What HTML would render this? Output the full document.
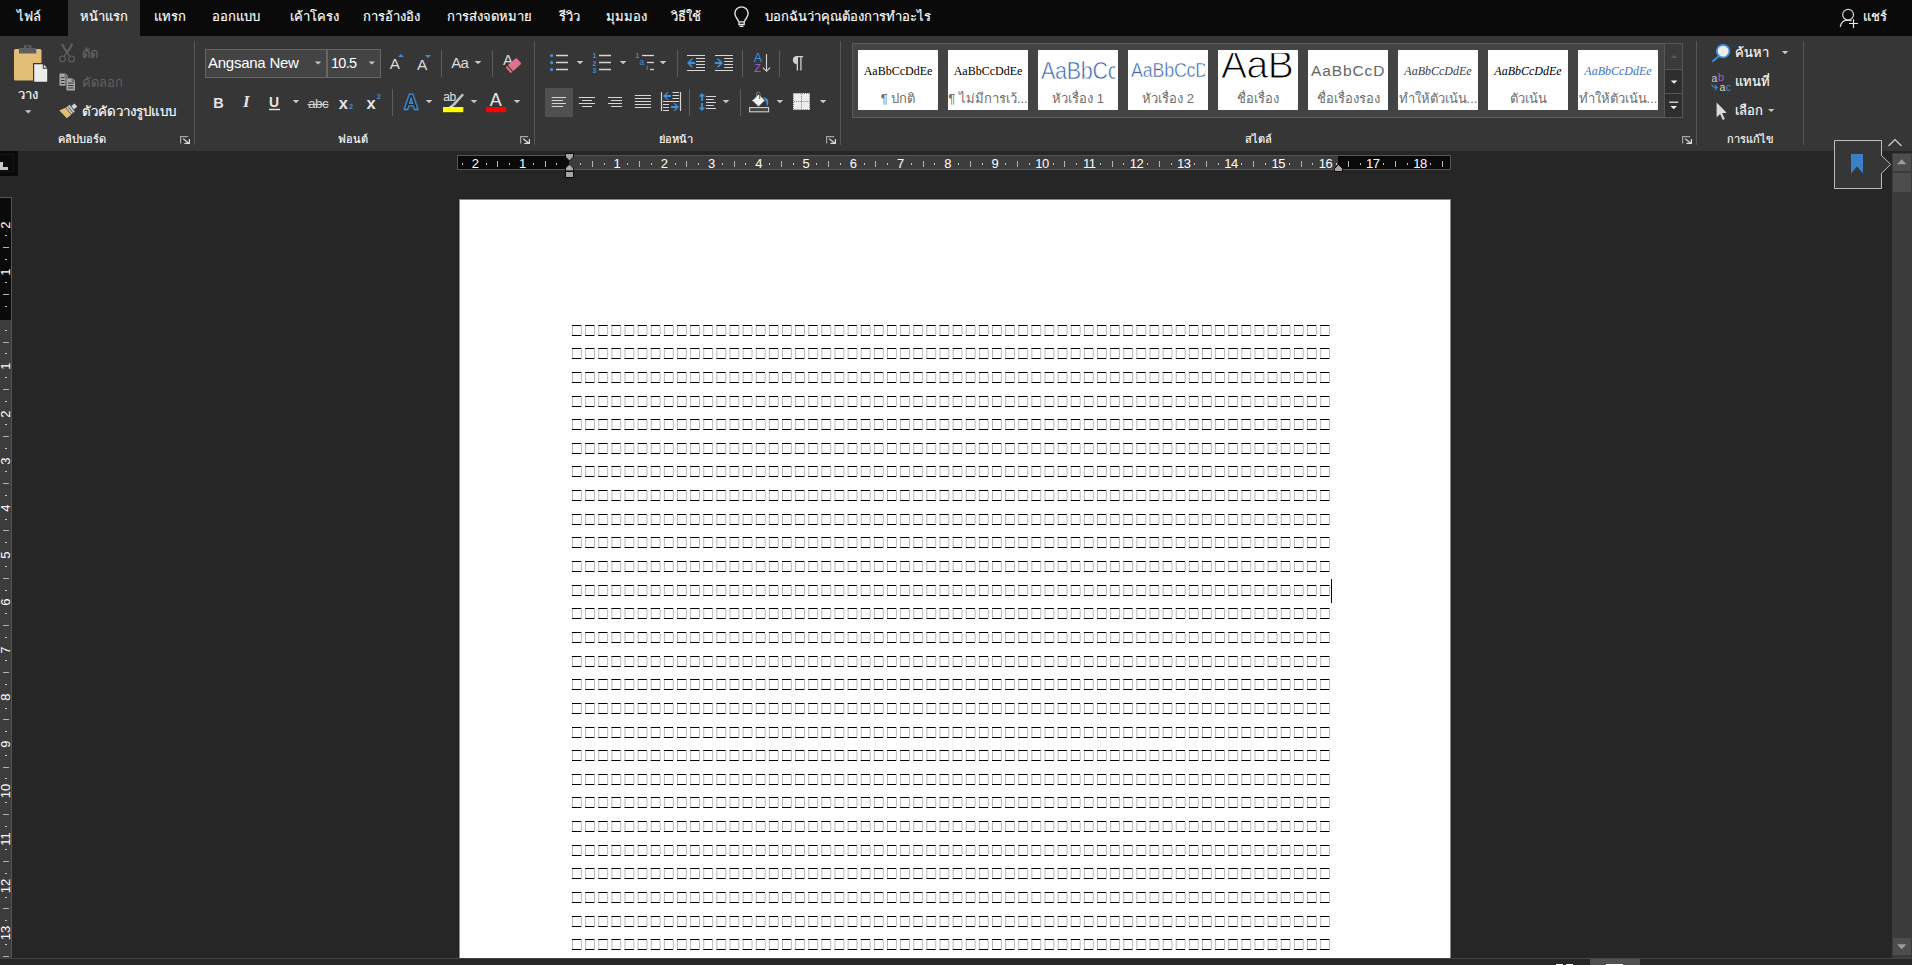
<!DOCTYPE html>
<html lang="th"><head><meta charset="utf-8"><title>Word</title>
<style>
*{box-sizing:border-box}
html,body{margin:0;padding:0}
html{overflow:hidden;background:#262626}
body{width:1912px;height:965px;overflow:hidden;background:#262626;position:relative;font-family:"Liberation Sans",sans-serif;font-size:15px;color:#fff}
.a{position:absolute}
#tabbar{position:absolute;left:0;top:0;width:1912px;height:36px;background:#0a0a0a}
#seltab{position:absolute;left:68px;top:0;width:72px;height:36px;background:#363636}
#ribbon{position:absolute;left:0;top:36px;width:1912px;height:115px;background:#363636}
.t{position:absolute;height:20px;line-height:20px;color:#fff;white-space:nowrap}
.th{-webkit-text-stroke:.15px}
.cb{background:#444;border:1px solid #666}
.tile{width:80px;height:60px;background:#fff;overflow:hidden}
.ts{position:absolute;left:3px;width:74px;clip-path:inset(-60px 0 -60px 0);height:20px;line-height:20px;text-align:center;white-space:nowrap}
.tl{position:absolute;left:-10px;width:100px;height:20px;line-height:20px;text-align:center;white-space:nowrap;font-size:13px;color:#6e6e6e}
#tabsel{position:absolute;left:0;top:151px;width:18px;height:25px;background:#0a0a0a}
#hr{position:absolute;left:457px;top:155px;width:994px;height:15px;background:#3c3c3c;border:1px solid #555}
#hrl{position:absolute;left:458px;top:156px;width:111px;height:13px;background:#0a0a0a}
#hrr{position:absolute;left:1338px;top:156px;width:112px;height:13px;background:#0a0a0a}
.rn{position:absolute;top:156px;width:40px;height:15px;line-height:15px;text-align:center;font-size:13px;color:#fff;letter-spacing:-.6px;text-indent:.6px}
#vr{position:absolute;left:0;top:197px;width:12px;height:761px;background:#3c3c3c;border-right:1px solid #555;border-top:1px solid #555}
#vrt{position:absolute;left:0;top:198px;width:11px;height:122px;background:#0a0a0a}
.vn{position:absolute;left:-14px;width:40px;height:40px;line-height:40px;text-align:center;font-size:13px;color:#fff;transform:rotate(-90deg)}
#page{position:absolute;left:460px;top:200px;width:990px;height:758px;background:#fff;box-shadow:0 0 0 1px #8c8c8c,0 0 0 2px #212121}
#caret{position:absolute;left:1331px;top:579px;width:1px;height:24px;background:#000}
#sb{position:absolute;left:1892px;top:153px;width:20px;height:805px;background:#3b3b3b}
#status{position:absolute;left:0;top:958px;width:1912px;height:7px;background:#262626;border-top:1px solid #444}
</style></head><body>
<div id="tabbar"><div id="seltab"></div><span class="t th" style="left:17px;top:6.5px;font-size:13px">ไฟล์</span><span class="t th" style="left:80px;top:6.5px;font-size:13px">หน้าแรก</span><span class="t th" style="left:154px;top:6.5px;font-size:13px">แทรก</span><span class="t th" style="left:212px;top:6.5px;font-size:13px">ออกแบบ</span><span class="t th" style="left:289.5px;top:6.5px;font-size:13px">เค้าโครง</span><span class="t th" style="left:363px;top:6.5px;font-size:13px">การอ้างอิง</span><span class="t th" style="left:447px;top:6.5px;font-size:13px">การส่งจดหมาย</span><span class="t th" style="left:559px;top:6.5px;font-size:13px">รีวิว</span><span class="t th" style="left:606px;top:6.5px;font-size:13px">มุมมอง</span><span class="t th" style="left:670.5px;top:6.5px;font-size:13px">วิธีใช้</span><span class="t th" style="left:765px;top:6.5px;font-size:13px">บอกฉันว่าคุณต้องการทำอะไร</span><span class="t th" style="left:1862.5px;top:6.5px;font-size:13px">แชร์</span><svg class="a" width="1912" height="36" viewBox="0 0 1912 36" style="left:0;top:0" fill="none" stroke="#e6e6e6" stroke-width="1.4"><path d="M738.8 21.6l-2.6-4.2a6.6 6.6 0 1 1 10.600 0l-2.6 4.200"/><path d="M738.900 21.800h5.300v2.700h-5.300zM739.600 26.400h3.900" stroke-width="1.300"/><g stroke="#d4d4d4" stroke-width="1.200"><circle cx="1848.100" cy="14.700" r="5.400"/><path d="M1840.300 27c.5-4.200 3.500-6.800 7.200-6.900 1.500 0 2.900.300 4.100.900"/><path d="M1853.500 19.200v8.800M1849 23.500h9" stroke="#e8e8e8"/></g></svg></div>
<div id="ribbon"><div class="a" style="left:0;top:-36px;width:0;height:0"><span class="t th" style="left:58px;top:129.2px;font-size:11px">คลิปบอร์ด</span><span class="t th" style="left:338px;top:129.2px;font-size:11px">ฟอนต์</span><span class="t th" style="left:659px;top:129.2px;font-size:11px">ย่อหน้า</span><span class="t th" style="left:1245px;top:129.2px;font-size:11px">สไตล์</span><span class="t th" style="left:1727px;top:129.2px;font-size:11px">การแก้ไข</span><span class="t th" style="left:17.5px;top:84.5px;font-size:13px">วาง</span><span class="t" style="left:82px;top:44.0px;font-size:13px;color:#6a6a6a">ตัด</span><span class="t" style="left:82px;top:72.5px;font-size:13px;color:#626262">คัดลอก</span><span class="t th" style="left:82px;top:101.9px;font-size:13.3px">ตัวคัดวางรูปแบบ</span><div class="a cb" style="left:205px;top:49px;width:122px;height:29px"></div><div class="a cb" style="left:327px;top:49px;width:54px;height:29px"></div><span class="t" style="left:208px;top:52.5px;font-size:15px;letter-spacing:-.25px">Angsana New</span><span class="t" style="left:331px;top:52.7px;font-size:14.5px;letter-spacing:-.7px">10.5</span><span class="t" style="left:389.8px;top:53.8px;font-size:15.3px;color:#dcdcdc">A</span><span class="t" style="left:417px;top:54.6px;font-size:15.5px;color:#dcdcdc">A</span><span class="t" style="left:451.3px;top:53.0px;font-size:15px;color:#dcdcdc;letter-spacing:-.7px">Aa</span><span class="t" style="left:503px;top:49.8px;font-size:15px;color:#dcdcdc">A</span><span class="t" style="left:213.3px;top:93.2px;font-size:14.5px;color:#e4e4e4;font-weight:bold">B</span><span class="t" style="left:243px;top:92.3px;font-size:17px;color:#e4e4e4;font-family:'Liberation Serif',serif;font-style:italic;font-weight:bold">I</span><span class="t" style="left:269px;top:91.9px;font-size:15.5px;color:#e4e4e4;font-weight:bold;transform:scaleX(.9);transform-origin:0 0">U</span><span class="t" style="left:308px;top:93.8px;font-size:13.5px;color:#d4d4d4;letter-spacing:-.5px">abc</span><span class="t" style="left:338.8px;top:92.8px;font-size:16.5px;color:#e4e4e4;font-weight:bold">x</span><span class="t" style="left:349px;top:97.2px;font-size:7.5px;color:#3f8fdc;font-weight:bold">2</span><span class="t" style="left:366.6px;top:92.8px;font-size:16.5px;color:#e4e4e4;font-weight:bold">x</span><span class="t" style="left:376.8px;top:87.2px;font-size:7.5px;color:#3f8fdc;font-weight:bold">2</span><span class="t" style="left:443.3px;top:86.6px;font-size:12px;color:#e0e0e0;letter-spacing:-.5px">ab</span><span class="t" style="left:489.7px;top:89.6px;font-size:18px;color:#e8e8e8">A</span><span class="t" style="left:592.6px;top:46.3px;font-size:6.8px;color:#3f8fdc;font-weight:bold">1</span><span class="t" style="left:592.6px;top:53.5px;font-size:6.8px;color:#3f8fdc;font-weight:bold">2</span><span class="t" style="left:592.6px;top:60.6px;font-size:6.8px;color:#3f8fdc;font-weight:bold">3</span><span class="t" style="left:635.4px;top:46.3px;font-size:6.8px;color:#3f8fdc;font-weight:bold">1</span><span class="t" style="left:639.6px;top:52.3px;font-size:8.5px;color:#3f8fdc">a</span><span class="t" style="left:646.4px;top:58.0px;font-size:8px;color:#3f8fdc">i</span><span class="t" style="left:753.8px;top:48.4px;font-size:12.3px;color:#3f8fdc">A</span><span class="t" style="left:754.2px;top:58.2px;font-size:10.8px;color:#a45fc0">Z</span><div class="a" style="left:852px;top:43px;width:813px;height:75px;background:#444;border:1px solid #5c5c5c"></div><div class="a tile" style="left:858px;top:50px"><span class="ts" style="top:11.0px;font-size:12px;color:#000;font-family:'Liberation Serif',serif">AaBbCcDdEe</span><span class="tl" style="top:39.2px">¶ ปกติ</span></div><div class="a tile" style="left:948px;top:50px"><span class="ts" style="top:11.0px;font-size:12px;color:#000;font-family:'Liberation Serif',serif">AaBbCcDdEe</span><span class="tl" style="top:39.2px">¶ ไม่มีการเว้...</span></div><div class="a tile" style="left:1038px;top:50px"><span class="ts" style="top:10.7px;font-size:23.5px;color:#3a66ae;text-align:left;letter-spacing:-.3px;-webkit-text-stroke:.55px #fff;width:81px;transform:scaleX(.915);transform-origin:0 0">AaBbCcDdEe</span><span class="tl" style="top:39.2px">หัวเรื่อง 1</span></div><div class="a tile" style="left:1128px;top:50px"><span class="ts" style="top:10.4px;font-size:19.5px;color:#3a66ae;text-align:left;letter-spacing:-.2px;-webkit-text-stroke:.45px #fff;width:81px;transform:scaleX(.915);transform-origin:0 0">AaBbCcDdEe</span><span class="tl" style="top:39.2px">หัวเรื่อง 2</span></div><div class="a tile" style="left:1218px;top:50px"><span class="ts" style="top:5.3px;font-size:39px;color:#000;text-align:left;-webkit-text-stroke:1px #fff;letter-spacing:-.5px;clip-path:inset(-2px 0 -60px 0)">AaB</span><span class="tl" style="top:39.2px">ชื่อเรื่อง</span></div><div class="a tile" style="left:1308px;top:50px"><span class="ts" style="top:11.0px;font-size:15.5px;color:#666;letter-spacing:.9px;text-align:left">AaBbCcD</span><span class="tl" style="top:39.2px">ชื่อเรื่องรอง</span></div><div class="a tile" style="left:1398px;top:50px"><span class="ts" style="top:10.8px;font-size:12px;color:#404040;font-family:'Liberation Serif',serif;font-style:italic">AaBbCcDdEe</span><span class="tl" style="top:39.2px">ทำให้ตัวเน้น...</span></div><div class="a tile" style="left:1488px;top:50px"><span class="ts" style="top:10.8px;font-size:12px;color:#000;font-family:'Liberation Serif',serif;font-style:italic">AaBbCcDdEe</span><span class="tl" style="top:39.2px">ตัวเน้น</span></div><div class="a tile" style="left:1578px;top:50px"><span class="ts" style="top:10.8px;font-size:12px;color:#4472c4;font-family:'Liberation Serif',serif;font-style:italic">AaBbCcDdEe</span><span class="tl" style="top:39.2px">ทำให้ตัวเน้น...</span></div><div class="a" style="left:1664px;top:43px;width:19px;height:27px;background:#3a3a3a;border:1px solid #565656"></div><div class="a" style="left:1664px;top:69px;width:19px;height:25px;background:#2e2e2e;border:1px solid #565656"></div><div class="a" style="left:1664px;top:93px;width:19px;height:25px;background:#2e2e2e;border:1px solid #565656"></div><span class="t th" style="left:1735px;top:43.1px;font-size:13px">ค้นหา</span><span class="t" style="left:1711.6px;top:67.8px;font-size:10.5px;color:#d0d0d0">a</span><span class="t" style="left:1717.8px;top:67.4px;font-size:11.5px;color:#a45fc0">b</span><span class="t" style="left:1719.6px;top:77.1px;font-size:10.5px;color:#d8d8d8">a</span><span class="t" style="left:1725.8px;top:77.1px;font-size:10.5px;color:#3f8fdc">c</span><span class="t th" style="left:1735px;top:72.2px;font-size:13px">แทนที่</span><span class="t th" style="left:1735px;top:101.1px;font-size:13px">เลือก</span><svg class="a" width="1912" height="115" viewBox="0 36 1912 115" style="left:0;top:36px"><path d="M194.5 41v104M534.5 41v104M840.5 41v104M1696.5 41v104M1803.5 41v104" stroke="#555" fill="none"/><path d="M441.5 50v27M492.5 50v27M677.5 50v27M742.5 50v27M779.5 50v27M392.5 89v27M689.5 89v27M740.5 89v27" stroke="#5c5c5c" fill="none"/><path d="M180.6 143.6v-7h7.6" stroke="#a4a4a4" stroke-width="1.2" fill="none"/><path d="M183.2 138.800l5.600 4.400M189.4 139v4.400h-5" stroke="#dadada" stroke-width="1.200" fill="none"/><path d="M520.6 143.6v-7h7.6" stroke="#a4a4a4" stroke-width="1.2" fill="none"/><path d="M523.2 138.800l5.600 4.400M529.4 139v4.400h-5" stroke="#dadada" stroke-width="1.200" fill="none"/><path d="M826.6 143.6v-7h7.6" stroke="#a4a4a4" stroke-width="1.2" fill="none"/><path d="M829.2 138.800l5.600 4.400M835.4 139v4.400h-5" stroke="#dadada" stroke-width="1.200" fill="none"/><path d="M1682.6 143.6v-7h7.6" stroke="#a4a4a4" stroke-width="1.2" fill="none"/><path d="M1685.2 138.800l5.600 4.400M1691.4 139v4.400h-5" stroke="#dadada" stroke-width="1.200" fill="none"/><rect x="14" y="49" width="27.5" height="31.5" rx="1.5" fill="#e3be77"/><path d="M19 48h5v-2.7h7.3v2.7h5v5.5h-17.3z" fill="#5e5e5e"/><rect x="26.4" y="46.2" width="2.4" height="1.8" fill="#363636"/><path d="M33 63h10.5l4.8 4.8v15.2h-15.3z" fill="#363636"/><path d="M34.2 64.2h8.6v4.6h4.4v13h-13z" fill="#ececec"/><path d="M43.8 64.6l3 3.2h-3z" fill="#ececec"/><path d="M25 110.2h6.4l-3.2 3.2z" fill="#c8c8c8"/><g stroke="#626262" fill="none" stroke-linecap="round"><path d="M62.300 44.600q2 4.400 4.700 7.600M71.900 44.600q-2 4.400-4.700 7.600" stroke-width="2"/><path d="M67 52.200l2.700 4.100M67 52.200l-2.700 4.100" stroke-width="1.200"/><circle cx="62.500" cy="58.900" r="2.900" stroke-width="1.100"/><circle cx="71.600" cy="58.900" r="2.900" stroke-width="1.100"/></g><path d="M59.5 73.5h6l2.6 2.6v9.6h-8.6z" fill="#a6a6a6"/><path d="M65.6 77.4h7.2l3 3v10.6h-10.2z" fill="#363636"/><path d="M66.4 78.2h6l2.6 2.6v9.6h-8.6z" fill="#a6a6a6"/><path d="M61 77.5h3.6M61 80.5h3.6M61 83.5h3.6M68 83h5.6M68 85.5h5.6M68 88h5.6" stroke="#363636" stroke-width="1" fill="none"/><path d="M65.2 73.9v2.5h2.5M72.2 78.6v2.5h2.5" stroke="#363636" stroke-width=".7" fill="none"/><path d="M59.3 110.4l6.1-2.7 5.8 7.1-4.4 3.5z" fill="#e2bd76"/><g transform="translate(68.3 111.25) rotate(-39)" fill="#c8c8c8"><rect x=".5" y="-4.4" width="1.9" height="8.8"/><rect x="3" y="-4.4" width="1.9" height="8.8"/><rect x="5.6" y="-2.1" width="4.2" height="4.2" fill="#d4d4d4"/></g><path d="M314.8 61.4h6.4l-3.2 3.2z" fill="#c8c8c8"/><path d="M368.6 61.4h6.4l-3.2 3.2z" fill="#c8c8c8"/><path d="M398 57l2.9-3 2.9 3z" fill="#3f8fdc"/><path d="M425 55h6l-3 3.1z" fill="#3f8fdc"/><path d="M474.7 61h6.6l-3.3 3.3z" fill="#c8c8c8"/><g transform="rotate(-42 513 66)"><rect x="506.5" y="62" width="14.5" height="8" rx="1.5" fill="#e0708c"/><rect x="508.6" y="61.5" width="1.1" height="8.5" fill="#363636"/></g><path d="M269 109.5h11" stroke="#e4e4e4" stroke-width="1.4"/><path d="M292.8 100.1h6.4l-3.2 3.2z" fill="#c8c8c8"/><path d="M307.5 104.5h21" stroke="#d4d4d4" stroke-width="1.1"/><path d="M409.400 94.300h3.400l5 15.100h-3.200l-1.100-3.600h-4.800l-1.100 3.600h-3.200zM411.100 97.800l-1.700 5.600h3.400z" fill="none" stroke="#3f8fdc" stroke-opacity=".35" stroke-width="2.800" stroke-linejoin="round"/><path d="M409.400 94.300h3.400l5 15.100h-3.200l-1.100-3.600h-4.800l-1.100 3.600h-3.200zM411.100 97.800l-1.700 5.600h3.400z" fill="#2a2a2a" fill-rule="evenodd" stroke="#3f8fdc" stroke-width="1.100" stroke-linejoin="round"/><path d="M425.8 99.9h6.6l-3.3 3.3z" fill="#c8c8c8"/><path d="M462.2 93.5l1.8 1.6-9.5 10.6-2.9-.6z" fill="#c4c4c4"/><path d="M451.6 105.1l2.9.6-2.3 1.3h-3.3z" fill="#e8e8e8"/><rect x="443" y="107" width="20.3" height="5.2" fill="#ff0"/><path d="M470.7 99.9h6.6l-3.3 3.3z" fill="#c8c8c8"/><rect x="486" y="107" width="20.2" height="5.2" fill="#f00"/><path d="M513.7 99.9h6.6l-3.3 3.3z" fill="#c8c8c8"/><circle cx="551.6" cy="55.6" r="1.65" fill="#3f8fdc"/><circle cx="551.6" cy="62.6" r="1.65" fill="#3f8fdc"/><circle cx="551.6" cy="69.6" r="1.65" fill="#3f8fdc"/><path d="M556 55.5H568M556 62.5H568M556 69.5H568" stroke="#d6d6d6" stroke-width="1.3" fill="none"/><path d="M576.7 61h6.6l-3.3 3.3z" fill="#c8c8c8"/><path d="M599 55.5H611M599 62.5H611M599 69.5H611" stroke="#d6d6d6" stroke-width="1.3" fill="none"/><path d="M619.8 61h6.6l-3.3 3.3z" fill="#c8c8c8"/><path d="M642 55.5H654" stroke="#d6d6d6" stroke-width="1.3" fill="none"/><path d="M647 62.5H654" stroke="#d6d6d6" stroke-width="1.3" fill="none"/><path d="M650 69.5H654" stroke="#d6d6d6" stroke-width="1.3" fill="none"/><path d="M659.7 61h6.6l-3.3 3.3z" fill="#c8c8c8"/><path d="M687 55.5H705M687 70.5H705" stroke="#d6d6d6" stroke-width="1.2" fill="none"/><path d="M696 58.5H705M696 61.5H705M696 64.5H705M696 67.5H705" stroke="#d6d6d6" stroke-width="1.2" fill="none"/><path d="M687 63l4.3-4.3h2.2l-3.3 3.3h5v2h-5l3.3 3.3h-2.2z" fill="#3f8fdc"/><path d="M715 55.5H733M715 70.5H733" stroke="#d6d6d6" stroke-width="1.2" fill="none"/><path d="M724.2 58.5H733M724.2 61.5H733M724.2 64.5H733M724.2 67.5H733" stroke="#d6d6d6" stroke-width="1.2" fill="none"/><path d="M723 63l-4.3-4.3h-2.2l3.3 3.3h-5v2h5l-3.3 3.3h2.2z" fill="#3f8fdc"/><path d="M766.5 54v17M763 67.6l3.5 3.7 3.5-3.7" stroke="#d6d6d6" stroke-width="1.1" fill="none"/><path d="M796.200 55.900h7v1.300h-1.600v13.200h-1.300v-13.200h-2.300v13.200h-1.300v-6.200a4.200 4.200 0 0 1-.500-8.300z" fill="#d0d0d0"/><rect x="545" y="88" width="28" height="29" fill="#505050"/><path d="M551.7 97.5H566M551.7 103.5H566" stroke="#d6d6d6" stroke-width="1" fill="none"/><path d="M551.7 100.5H563M551.7 106.5H563" stroke="#d6d6d6" stroke-width="1" fill="none"/><path d="M578.8 97.5H595M578.8 103.5H595" stroke="#d6d6d6" stroke-width="1" fill="none"/><path d="M582 100.5H592M582 106.5H592" stroke="#d6d6d6" stroke-width="1" fill="none"/><path d="M608 97.5H622M608 103.5H622" stroke="#d6d6d6" stroke-width="1" fill="none"/><path d="M611 100.5H622M611 106.5H622" stroke="#d6d6d6" stroke-width="1" fill="none"/><path d="M634.8 95.5H651M634.8 98.5H651M634.8 101.5H651M634.8 104.5H651M634.8 107.5H651" stroke="#d6d6d6" stroke-width="1" fill="none"/><path d="M661.5 92v19M680.5 92v19" stroke="#d6d6d6" stroke-width="1.2" fill="none"/><path d="M672.5 92.5H679M672.5 95.5H679M672.5 98.5H679" stroke="#d6d6d6" stroke-width="1" fill="none"/><path d="M663 101.5H679" stroke="#d6d6d6" stroke-width="1" fill="none"/><path d="M663 104.5H669M663 107.5H669M663 110.5H669" stroke="#d6d6d6" stroke-width="1" fill="none"/><path d="M663 96l3.8-3.8h2l-2.9 2.9h5.1v1.8h-5.1l2.9 2.9h-2z" fill="#3f8fdc"/><path d="M679 107l-3.8-3.8h-2l2.9 2.9h-5.1v1.8h5.1l-2.9 2.9h2z" fill="#3f8fdc"/><path d="M706 96.5H716M706 102.5H716M706 108.5H716" stroke="#d6d6d6" stroke-width="1" fill="none"/><path d="M706 99.5H713.8M706 105.5H713.8" stroke="#d6d6d6" stroke-width="1" fill="none"/><path d="M702 93l3.400 3.600h-2.500v4.400h-1.800v-4.400h-2.500zM702 111l3.400-3.600h-2.500v-4.400h-1.800v4.400h-2.500z" fill="#3f8fdc"/><path d="M722.7 99.9h6.6l-3.3 3.3z" fill="#c8c8c8"/><rect x="749.6" y="107.6" width="19" height="4.2" fill="#444" stroke="#cfcfcf" stroke-width="1.1"/><path d="M756.8 97v-3.3a1.6 1.6 0 0 1 3.2 0v3" stroke="#8a8a8a" stroke-width="1" fill="none"/><path d="M758.7 94.4l6 6-6.2 6.2-6-6z" fill="#f0f0f0"/><path d="M752.4 100.6h2" stroke="#f0f0f0"/><path d="M763.4 97c2.6.2 4.6 2 4.9 4.6.2 1.8-.4 3.4-1.3 4.9-.5-2.6-.6-4.3-1.6-5.9z" fill="#3f8fdc"/><path d="M759.7 93.5v5.5" stroke="#363636" stroke-width=".8"/><path d="M776.6 99.9h6.6l-3.3 3.3z" fill="#c8c8c8"/><rect x="793" y="93" width="17" height="17" fill="#ececec"/><path d="M793.5 93.5h16v16h-16zM801.5 94v16M794 101.5h16" stroke="#7a7a7a" stroke-width="1" stroke-dasharray="1 1.100" fill="none"/><path d="M819.8 99.9h6.6l-3.3 3.3z" fill="#c8c8c8"/><path d="M1670.8 58h6.6l-3.3-3.1z" fill="#5a5a5a"/><path d="M1670.8 80.4h6.6l-3.3 3.3z" fill="#f0f0f0"/><path d="M1669.2 102.2h9" stroke="#f0f0f0" stroke-width="1.2"/><path d="M1670.4 105.9h6.6l-3.3 3.3z" fill="#f0f0f0"/><circle cx="1723.1" cy="51.1" r="6.3" fill="#ececec" stroke="#3f8fdc" stroke-width="1.7"/><path d="M1718.4 56.6l-5.6 4.6" stroke="#3f8fdc" stroke-width="1.9" stroke-linecap="round"/><path d="M1781.9 51.1h6.4l-3.2 3.2z" fill="#c8c8c8"/><path d="M1711.7 84.3c.2 2.2 1.4 3.2 4.8 3.2M1714.6 85.2l2.6 2.3-2.6 2.3" stroke="#3f8fdc" stroke-width="1.1" fill="none"/><path d="M1716.6 102.4v14.9l3.5-3.3 2.7 6 2-.9-2.7-5.9 4.6-.4z" fill="#dcdcdc"/><path d="M1768 108.9h6.4l-3.2 3.2z" fill="#c8c8c8"/><path d="M1888.5 146l6.5-6.5 6.5 6.5" stroke="#d0d0d0" stroke-width="1.2" fill="none"/></svg></div></div>
<div id="tabsel"><div class="a" style="left:-1px;top:3px;width:15px;height:18px;border:1px solid #151515"></div><svg class="a" style="left:0;top:11px" width="9" height="9"><path d="M0 0h3v5h5v3H0z" fill="#c6c6c6"/></svg></div>
<div id="hr"></div><div id="hrl"></div><div id="hrr"></div><span class="rn" style="left:454.8px">2</span><span class="rn" style="left:502.1px">1</span><span class="rn" style="left:596.5px">1</span><span class="rn" style="left:643.8px">2</span><span class="rn" style="left:691.0px">3</span><span class="rn" style="left:738.3px">4</span><span class="rn" style="left:785.5px">5</span><span class="rn" style="left:832.7px">6</span><span class="rn" style="left:880.0px">7</span><span class="rn" style="left:927.2px">8</span><span class="rn" style="left:974.5px">9</span><span class="rn" style="left:1021.7px">10</span><span class="rn" style="left:1068.9px">11</span><span class="rn" style="left:1116.2px">12</span><span class="rn" style="left:1163.4px">13</span><span class="rn" style="left:1210.7px">14</span><span class="rn" style="left:1257.9px">15</span><span class="rn" style="left:1305.1px">16</span><span class="rn" style="left:1352.4px">17</span><span class="rn" style="left:1399.6px">18</span><svg class="a" width="1912" height="30" viewBox="0 151 1912 30" style="left:0;top:151px"><path d="M462.5 163v2M486.5 163v2M509.5 163v2M533.5 163v2M556.5 163v2M580.5 163v2M604.5 163v2M627.5 163v2M651.5 163v2M675.5 163v2M698.5 163v2M722.5 163v2M745.5 163v2M769.5 163v2M793.5 163v2M816.5 163v2M840.5 163v2M864.5 163v2M887.5 163v2M911.5 163v2M934.5 163v2M958.5 163v2M982.5 163v2M1005.5 163v2M1029.5 163v2M1053.5 163v2M1076.5 163v2M1100.5 163v2M1123.5 163v2M1147.5 163v2M1171.5 163v2M1194.5 163v2M1218.5 163v2M1241.5 163v2M1265.5 163v2M1289.5 163v2M1312.5 163v2M1336.5 163v2M1360.5 163v2M1383.5 163v2M1407.5 163v2M1430.5 163v2" stroke="#c4c4c4" fill="none"/><path d="M497.5 161v6M545.5 161v6M592.5 161v6M639.5 161v6M686.5 161v6M734.5 161v6M781.5 161v6M828.5 161v6M875.5 161v6M923.5 161v6M970.5 161v6M1017.5 161v6M1064.5 161v6M1112.5 161v6M1159.5 161v6M1206.5 161v6M1253.5 161v6M1301.5 161v6M1348.5 161v6M1395.5 161v6M1442.5 161v6" stroke="#b4b4b4" fill="none"/><g fill="#a6a6a6" stroke="#0a0a0a" stroke-width="1"><path d="M565.5 153.5h8v3.5l-4 4-4-4z"/><path d="M569.5 164l4 4v3h-8v-3z"/><path d="M565.5 171.5h8v6h-8z"/><path d="M1338.5 164.5l4 4v3h-8v-3z"/></g></svg>
<div id="vr"></div><div id="vrt"></div><span class="vn" style="top:204.5px">2</span><span class="vn" style="top:251.8px">1</span><span class="vn" style="top:346.2px">1</span><span class="vn" style="top:393.5px">2</span><span class="vn" style="top:440.7px">3</span><span class="vn" style="top:488.0px">4</span><span class="vn" style="top:535.2px">5</span><span class="vn" style="top:582.4px">6</span><span class="vn" style="top:629.7px">7</span><span class="vn" style="top:676.9px">8</span><span class="vn" style="top:724.2px">9</span><span class="vn" style="top:771.4px">10</span><span class="vn" style="top:818.6px">11</span><span class="vn" style="top:865.9px">12</span><span class="vn" style="top:913.1px">13</span><svg class="a" width="12" height="965" viewBox="0 0 12 965" style="left:0;top:0"><path d="M5 235.5h2M5 259.5h2M5 282.5h2M5 306.5h2M5 330.5h2M5 353.5h2M5 377.5h2M5 401.5h2M5 424.5h2M5 448.5h2M5 471.5h2M5 495.5h2M5 519.5h2M5 542.5h2M5 566.5h2M5 590.5h2M5 613.5h2M5 637.5h2M5 660.5h2M5 684.5h2M5 708.5h2M5 731.5h2M5 755.5h2M5 778.5h2M5 802.5h2M5 826.5h2M5 849.5h2M5 873.5h2M5 897.5h2M5 920.5h2M5 944.5h2" stroke="#c4c4c4" fill="none"/><path d="M3 247.5h6M3 294.5h6M3 342.5h6M3 389.5h6M3 436.5h6M3 483.5h6M3 530.5h6M3 578.5h6M3 625.5h6M3 672.5h6M3 719.5h6M3 767.5h6M3 814.5h6M3 861.5h6M3 908.5h6M3 956.5h6" stroke="#b4b4b4" fill="none"/></svg>
<div id="page"></div><svg id="boxes" width="1912" height="965" viewBox="0 0 1912 965" style="position:absolute;left:0;top:0" fill="none" stroke="#000" stroke-width="1"><path d="M572 325.5h9.3m-9.3 10h9.3m3.825-10h9.3m-9.3 10h9.3m3.825-10h9.3m-9.3 10h9.3m3.825-10h9.3m-9.3 10h9.3m3.825-10h9.3m-9.3 10h9.3m3.825-10h9.3m-9.3 10h9.3m3.825-10h9.3m-9.3 10h9.3m3.825-10h9.3m-9.3 10h9.3m3.825-10h9.3m-9.3 10h9.3m3.825-10h9.3m-9.3 10h9.3m3.825-10h9.3m-9.3 10h9.3m3.825-10h9.3m-9.3 10h9.3m3.825-10h9.3m-9.3 10h9.3m3.825-10h9.3m-9.3 10h9.3m3.825-10h9.3m-9.3 10h9.3m3.825-10h9.3m-9.3 10h9.3m3.825-10h9.3m-9.3 10h9.3m3.825-10h9.3m-9.3 10h9.3m3.825-10h9.3m-9.3 10h9.3m3.825-10h9.3m-9.3 10h9.3m3.825-10h9.3m-9.3 10h9.3m3.825-10h9.3m-9.3 10h9.3m3.825-10h9.3m-9.3 10h9.3m3.825-10h9.3m-9.3 10h9.3m3.825-10h9.3m-9.3 10h9.3m3.825-10h9.3m-9.3 10h9.3m3.825-10h9.3m-9.3 10h9.3m3.825-10h9.3m-9.3 10h9.3m3.825-10h9.3m-9.3 10h9.3m3.825-10h9.3m-9.3 10h9.3m3.825-10h9.3m-9.3 10h9.3m3.825-10h9.3m-9.3 10h9.3m3.825-10h9.3m-9.3 10h9.3m3.825-10h9.3m-9.3 10h9.3m3.825-10h9.3m-9.3 10h9.3m3.825-10h9.3m-9.3 10h9.3m3.825-10h9.3m-9.3 10h9.3m3.825-10h9.3m-9.3 10h9.3m3.825-10h9.3m-9.3 10h9.3m3.825-10h9.3m-9.3 10h9.3m3.825-10h9.3m-9.3 10h9.3m3.825-10h9.3m-9.3 10h9.3m3.825-10h9.3m-9.3 10h9.3m3.825-10h9.3m-9.3 10h9.3m3.825-10h9.3m-9.3 10h9.3m3.825-10h9.3m-9.3 10h9.3m3.825-10h9.3m-9.3 10h9.3m3.825-10h9.3m-9.3 10h9.3m3.825-10h9.3m-9.3 10h9.3m3.825-10h9.3m-9.3 10h9.3m3.825-10h9.3m-9.3 10h9.3m3.825-10h9.3m-9.3 10h9.3m3.825-10h9.3m-9.3 10h9.3m3.825-10h9.3m-9.3 10h9.3m3.825-10h9.3m-9.3 10h9.3m3.825-10h9.3m-9.3 10h9.3m3.825-10h9.3m-9.3 10h9.3m3.825-10h9.3m-9.3 10h9.3M572 348.5h9.3m-9.3 10h9.3m3.825-10h9.3m-9.3 10h9.3m3.825-10h9.3m-9.3 10h9.3m3.825-10h9.3m-9.3 10h9.3m3.825-10h9.3m-9.3 10h9.3m3.825-10h9.3m-9.3 10h9.3m3.825-10h9.3m-9.3 10h9.3m3.825-10h9.3m-9.3 10h9.3m3.825-10h9.3m-9.3 10h9.3m3.825-10h9.3m-9.3 10h9.3m3.825-10h9.3m-9.3 10h9.3m3.825-10h9.3m-9.3 10h9.3m3.825-10h9.3m-9.3 10h9.3m3.825-10h9.3m-9.3 10h9.3m3.825-10h9.3m-9.3 10h9.3m3.825-10h9.3m-9.3 10h9.3m3.825-10h9.3m-9.3 10h9.3m3.825-10h9.3m-9.3 10h9.3m3.825-10h9.3m-9.3 10h9.3m3.825-10h9.3m-9.3 10h9.3m3.825-10h9.3m-9.3 10h9.3m3.825-10h9.3m-9.3 10h9.3m3.825-10h9.3m-9.3 10h9.3m3.825-10h9.3m-9.3 10h9.3m3.825-10h9.3m-9.3 10h9.3m3.825-10h9.3m-9.3 10h9.3m3.825-10h9.3m-9.3 10h9.3m3.825-10h9.3m-9.3 10h9.3m3.825-10h9.3m-9.3 10h9.3m3.825-10h9.3m-9.3 10h9.3m3.825-10h9.3m-9.3 10h9.3m3.825-10h9.3m-9.3 10h9.3m3.825-10h9.3m-9.3 10h9.3m3.825-10h9.3m-9.3 10h9.3m3.825-10h9.3m-9.3 10h9.3m3.825-10h9.3m-9.3 10h9.3m3.825-10h9.3m-9.3 10h9.3m3.825-10h9.3m-9.3 10h9.3m3.825-10h9.3m-9.3 10h9.3m3.825-10h9.3m-9.3 10h9.3m3.825-10h9.3m-9.3 10h9.3m3.825-10h9.3m-9.3 10h9.3m3.825-10h9.3m-9.3 10h9.3m3.825-10h9.3m-9.3 10h9.3m3.825-10h9.3m-9.3 10h9.3m3.825-10h9.3m-9.3 10h9.3m3.825-10h9.3m-9.3 10h9.3m3.825-10h9.3m-9.3 10h9.3m3.825-10h9.3m-9.3 10h9.3m3.825-10h9.3m-9.3 10h9.3m3.825-10h9.3m-9.3 10h9.3m3.825-10h9.3m-9.3 10h9.3m3.825-10h9.3m-9.3 10h9.3m3.825-10h9.3m-9.3 10h9.3m3.825-10h9.3m-9.3 10h9.3m3.825-10h9.3m-9.3 10h9.3m3.825-10h9.3m-9.3 10h9.3m3.825-10h9.3m-9.3 10h9.3M572 372.5h9.3m-9.3 10h9.3m3.825-10h9.3m-9.3 10h9.3m3.825-10h9.3m-9.3 10h9.3m3.825-10h9.3m-9.3 10h9.3m3.825-10h9.3m-9.3 10h9.3m3.825-10h9.3m-9.3 10h9.3m3.825-10h9.3m-9.3 10h9.3m3.825-10h9.3m-9.3 10h9.3m3.825-10h9.3m-9.3 10h9.3m3.825-10h9.3m-9.3 10h9.3m3.825-10h9.3m-9.3 10h9.3m3.825-10h9.3m-9.3 10h9.3m3.825-10h9.3m-9.3 10h9.3m3.825-10h9.3m-9.3 10h9.3m3.825-10h9.3m-9.3 10h9.3m3.825-10h9.3m-9.3 10h9.3m3.825-10h9.3m-9.3 10h9.3m3.825-10h9.3m-9.3 10h9.3m3.825-10h9.3m-9.3 10h9.3m3.825-10h9.3m-9.3 10h9.3m3.825-10h9.3m-9.3 10h9.3m3.825-10h9.3m-9.3 10h9.3m3.825-10h9.3m-9.3 10h9.3m3.825-10h9.3m-9.3 10h9.3m3.825-10h9.3m-9.3 10h9.3m3.825-10h9.3m-9.3 10h9.3m3.825-10h9.3m-9.3 10h9.3m3.825-10h9.3m-9.3 10h9.3m3.825-10h9.3m-9.3 10h9.3m3.825-10h9.3m-9.3 10h9.3m3.825-10h9.3m-9.3 10h9.3m3.825-10h9.3m-9.3 10h9.3m3.825-10h9.3m-9.3 10h9.3m3.825-10h9.3m-9.3 10h9.3m3.825-10h9.3m-9.3 10h9.3m3.825-10h9.3m-9.3 10h9.3m3.825-10h9.3m-9.3 10h9.3m3.825-10h9.3m-9.3 10h9.3m3.825-10h9.3m-9.3 10h9.3m3.825-10h9.3m-9.3 10h9.3m3.825-10h9.3m-9.3 10h9.3m3.825-10h9.3m-9.3 10h9.3m3.825-10h9.3m-9.3 10h9.3m3.825-10h9.3m-9.3 10h9.3m3.825-10h9.3m-9.3 10h9.3m3.825-10h9.3m-9.3 10h9.3m3.825-10h9.3m-9.3 10h9.3m3.825-10h9.3m-9.3 10h9.3m3.825-10h9.3m-9.3 10h9.3m3.825-10h9.3m-9.3 10h9.3m3.825-10h9.3m-9.3 10h9.3m3.825-10h9.3m-9.3 10h9.3m3.825-10h9.3m-9.3 10h9.3m3.825-10h9.3m-9.3 10h9.3m3.825-10h9.3m-9.3 10h9.3m3.825-10h9.3m-9.3 10h9.3m3.825-10h9.3m-9.3 10h9.3m3.825-10h9.3m-9.3 10h9.3M572 396.5h9.3m-9.3 10h9.3m3.825-10h9.3m-9.3 10h9.3m3.825-10h9.3m-9.3 10h9.3m3.825-10h9.3m-9.3 10h9.3m3.825-10h9.3m-9.3 10h9.3m3.825-10h9.3m-9.3 10h9.3m3.825-10h9.3m-9.3 10h9.3m3.825-10h9.3m-9.3 10h9.3m3.825-10h9.3m-9.3 10h9.3m3.825-10h9.3m-9.3 10h9.3m3.825-10h9.3m-9.3 10h9.3m3.825-10h9.3m-9.3 10h9.3m3.825-10h9.3m-9.3 10h9.3m3.825-10h9.3m-9.3 10h9.3m3.825-10h9.3m-9.3 10h9.3m3.825-10h9.3m-9.3 10h9.3m3.825-10h9.3m-9.3 10h9.3m3.825-10h9.3m-9.3 10h9.3m3.825-10h9.3m-9.3 10h9.3m3.825-10h9.3m-9.3 10h9.3m3.825-10h9.3m-9.3 10h9.3m3.825-10h9.3m-9.3 10h9.3m3.825-10h9.3m-9.3 10h9.3m3.825-10h9.3m-9.3 10h9.3m3.825-10h9.3m-9.3 10h9.3m3.825-10h9.3m-9.3 10h9.3m3.825-10h9.3m-9.3 10h9.3m3.825-10h9.3m-9.3 10h9.3m3.825-10h9.3m-9.3 10h9.3m3.825-10h9.3m-9.3 10h9.3m3.825-10h9.3m-9.3 10h9.3m3.825-10h9.3m-9.3 10h9.3m3.825-10h9.3m-9.3 10h9.3m3.825-10h9.3m-9.3 10h9.3m3.825-10h9.3m-9.3 10h9.3m3.825-10h9.3m-9.3 10h9.3m3.825-10h9.3m-9.3 10h9.3m3.825-10h9.3m-9.3 10h9.3m3.825-10h9.3m-9.3 10h9.3m3.825-10h9.3m-9.3 10h9.3m3.825-10h9.3m-9.3 10h9.3m3.825-10h9.3m-9.3 10h9.3m3.825-10h9.3m-9.3 10h9.3m3.825-10h9.3m-9.3 10h9.3m3.825-10h9.3m-9.3 10h9.3m3.825-10h9.3m-9.3 10h9.3m3.825-10h9.3m-9.3 10h9.3m3.825-10h9.3m-9.3 10h9.3m3.825-10h9.3m-9.3 10h9.3m3.825-10h9.3m-9.3 10h9.3m3.825-10h9.3m-9.3 10h9.3m3.825-10h9.3m-9.3 10h9.3m3.825-10h9.3m-9.3 10h9.3m3.825-10h9.3m-9.3 10h9.3m3.825-10h9.3m-9.3 10h9.3m3.825-10h9.3m-9.3 10h9.3m3.825-10h9.3m-9.3 10h9.3m3.825-10h9.3m-9.3 10h9.3M572 419.5h9.3m-9.3 10h9.3m3.825-10h9.3m-9.3 10h9.3m3.825-10h9.3m-9.3 10h9.3m3.825-10h9.3m-9.3 10h9.3m3.825-10h9.3m-9.3 10h9.3m3.825-10h9.3m-9.3 10h9.3m3.825-10h9.3m-9.3 10h9.3m3.825-10h9.3m-9.3 10h9.3m3.825-10h9.3m-9.3 10h9.3m3.825-10h9.3m-9.3 10h9.3m3.825-10h9.3m-9.3 10h9.3m3.825-10h9.3m-9.3 10h9.3m3.825-10h9.3m-9.3 10h9.3m3.825-10h9.3m-9.3 10h9.3m3.825-10h9.3m-9.3 10h9.3m3.825-10h9.3m-9.3 10h9.3m3.825-10h9.3m-9.3 10h9.3m3.825-10h9.3m-9.3 10h9.3m3.825-10h9.3m-9.3 10h9.3m3.825-10h9.3m-9.3 10h9.3m3.825-10h9.3m-9.3 10h9.3m3.825-10h9.3m-9.3 10h9.3m3.825-10h9.3m-9.3 10h9.3m3.825-10h9.3m-9.3 10h9.3m3.825-10h9.3m-9.3 10h9.3m3.825-10h9.3m-9.3 10h9.3m3.825-10h9.3m-9.3 10h9.3m3.825-10h9.3m-9.3 10h9.3m3.825-10h9.3m-9.3 10h9.3m3.825-10h9.3m-9.3 10h9.3m3.825-10h9.3m-9.3 10h9.3m3.825-10h9.3m-9.3 10h9.3m3.825-10h9.3m-9.3 10h9.3m3.825-10h9.3m-9.3 10h9.3m3.825-10h9.3m-9.3 10h9.3m3.825-10h9.3m-9.3 10h9.3m3.825-10h9.3m-9.3 10h9.3m3.825-10h9.3m-9.3 10h9.3m3.825-10h9.3m-9.3 10h9.3m3.825-10h9.3m-9.3 10h9.3m3.825-10h9.3m-9.3 10h9.3m3.825-10h9.3m-9.3 10h9.3m3.825-10h9.3m-9.3 10h9.3m3.825-10h9.3m-9.3 10h9.3m3.825-10h9.3m-9.3 10h9.3m3.825-10h9.3m-9.3 10h9.3m3.825-10h9.3m-9.3 10h9.3m3.825-10h9.3m-9.3 10h9.3m3.825-10h9.3m-9.3 10h9.3m3.825-10h9.3m-9.3 10h9.3m3.825-10h9.3m-9.3 10h9.3m3.825-10h9.3m-9.3 10h9.3m3.825-10h9.3m-9.3 10h9.3m3.825-10h9.3m-9.3 10h9.3m3.825-10h9.3m-9.3 10h9.3m3.825-10h9.3m-9.3 10h9.3m3.825-10h9.3m-9.3 10h9.3m3.825-10h9.3m-9.3 10h9.3M572 443.5h9.3m-9.3 10h9.3m3.825-10h9.3m-9.3 10h9.3m3.825-10h9.3m-9.3 10h9.3m3.825-10h9.3m-9.3 10h9.3m3.825-10h9.3m-9.3 10h9.3m3.825-10h9.3m-9.3 10h9.3m3.825-10h9.3m-9.3 10h9.3m3.825-10h9.3m-9.3 10h9.3m3.825-10h9.3m-9.3 10h9.3m3.825-10h9.3m-9.3 10h9.3m3.825-10h9.3m-9.3 10h9.3m3.825-10h9.3m-9.3 10h9.3m3.825-10h9.3m-9.3 10h9.3m3.825-10h9.3m-9.3 10h9.3m3.825-10h9.3m-9.3 10h9.3m3.825-10h9.3m-9.3 10h9.3m3.825-10h9.3m-9.3 10h9.3m3.825-10h9.3m-9.3 10h9.3m3.825-10h9.3m-9.3 10h9.3m3.825-10h9.3m-9.3 10h9.3m3.825-10h9.3m-9.3 10h9.3m3.825-10h9.3m-9.3 10h9.3m3.825-10h9.3m-9.3 10h9.3m3.825-10h9.3m-9.3 10h9.3m3.825-10h9.3m-9.3 10h9.3m3.825-10h9.3m-9.3 10h9.3m3.825-10h9.3m-9.3 10h9.3m3.825-10h9.3m-9.3 10h9.3m3.825-10h9.3m-9.3 10h9.3m3.825-10h9.3m-9.3 10h9.3m3.825-10h9.3m-9.3 10h9.3m3.825-10h9.3m-9.3 10h9.3m3.825-10h9.3m-9.3 10h9.3m3.825-10h9.3m-9.3 10h9.3m3.825-10h9.3m-9.3 10h9.3m3.825-10h9.3m-9.3 10h9.3m3.825-10h9.3m-9.3 10h9.3m3.825-10h9.3m-9.3 10h9.3m3.825-10h9.3m-9.3 10h9.3m3.825-10h9.3m-9.3 10h9.3m3.825-10h9.3m-9.3 10h9.3m3.825-10h9.3m-9.3 10h9.3m3.825-10h9.3m-9.3 10h9.3m3.825-10h9.3m-9.3 10h9.3m3.825-10h9.3m-9.3 10h9.3m3.825-10h9.3m-9.3 10h9.3m3.825-10h9.3m-9.3 10h9.3m3.825-10h9.3m-9.3 10h9.3m3.825-10h9.3m-9.3 10h9.3m3.825-10h9.3m-9.3 10h9.3m3.825-10h9.3m-9.3 10h9.3m3.825-10h9.3m-9.3 10h9.3m3.825-10h9.3m-9.3 10h9.3m3.825-10h9.3m-9.3 10h9.3m3.825-10h9.3m-9.3 10h9.3m3.825-10h9.3m-9.3 10h9.3m3.825-10h9.3m-9.3 10h9.3m3.825-10h9.3m-9.3 10h9.3M572 466.5h9.3m-9.3 10h9.3m3.825-10h9.3m-9.3 10h9.3m3.825-10h9.3m-9.3 10h9.3m3.825-10h9.3m-9.3 10h9.3m3.825-10h9.3m-9.3 10h9.3m3.825-10h9.3m-9.3 10h9.3m3.825-10h9.3m-9.3 10h9.3m3.825-10h9.3m-9.3 10h9.3m3.825-10h9.3m-9.3 10h9.3m3.825-10h9.3m-9.3 10h9.3m3.825-10h9.3m-9.3 10h9.3m3.825-10h9.3m-9.3 10h9.3m3.825-10h9.3m-9.3 10h9.3m3.825-10h9.3m-9.3 10h9.3m3.825-10h9.3m-9.3 10h9.3m3.825-10h9.3m-9.3 10h9.3m3.825-10h9.3m-9.3 10h9.3m3.825-10h9.3m-9.3 10h9.3m3.825-10h9.3m-9.3 10h9.3m3.825-10h9.3m-9.3 10h9.3m3.825-10h9.3m-9.3 10h9.3m3.825-10h9.3m-9.3 10h9.3m3.825-10h9.3m-9.3 10h9.3m3.825-10h9.3m-9.3 10h9.3m3.825-10h9.3m-9.3 10h9.3m3.825-10h9.3m-9.3 10h9.3m3.825-10h9.3m-9.3 10h9.3m3.825-10h9.3m-9.3 10h9.3m3.825-10h9.3m-9.3 10h9.3m3.825-10h9.3m-9.3 10h9.3m3.825-10h9.3m-9.3 10h9.3m3.825-10h9.3m-9.3 10h9.3m3.825-10h9.3m-9.3 10h9.3m3.825-10h9.3m-9.3 10h9.3m3.825-10h9.3m-9.3 10h9.3m3.825-10h9.3m-9.3 10h9.3m3.825-10h9.3m-9.3 10h9.3m3.825-10h9.3m-9.3 10h9.3m3.825-10h9.3m-9.3 10h9.3m3.825-10h9.3m-9.3 10h9.3m3.825-10h9.3m-9.3 10h9.3m3.825-10h9.3m-9.3 10h9.3m3.825-10h9.3m-9.3 10h9.3m3.825-10h9.3m-9.3 10h9.3m3.825-10h9.3m-9.3 10h9.3m3.825-10h9.3m-9.3 10h9.3m3.825-10h9.3m-9.3 10h9.3m3.825-10h9.3m-9.3 10h9.3m3.825-10h9.3m-9.3 10h9.3m3.825-10h9.3m-9.3 10h9.3m3.825-10h9.3m-9.3 10h9.3m3.825-10h9.3m-9.3 10h9.3m3.825-10h9.3m-9.3 10h9.3m3.825-10h9.3m-9.3 10h9.3m3.825-10h9.3m-9.3 10h9.3m3.825-10h9.3m-9.3 10h9.3m3.825-10h9.3m-9.3 10h9.3m3.825-10h9.3m-9.3 10h9.3M572 490.5h9.3m-9.3 10h9.3m3.825-10h9.3m-9.3 10h9.3m3.825-10h9.3m-9.3 10h9.3m3.825-10h9.3m-9.3 10h9.3m3.825-10h9.3m-9.3 10h9.3m3.825-10h9.3m-9.3 10h9.3m3.825-10h9.3m-9.3 10h9.3m3.825-10h9.3m-9.3 10h9.3m3.825-10h9.3m-9.3 10h9.3m3.825-10h9.3m-9.3 10h9.3m3.825-10h9.3m-9.3 10h9.3m3.825-10h9.3m-9.3 10h9.3m3.825-10h9.3m-9.3 10h9.3m3.825-10h9.3m-9.3 10h9.3m3.825-10h9.3m-9.3 10h9.3m3.825-10h9.3m-9.3 10h9.3m3.825-10h9.3m-9.3 10h9.3m3.825-10h9.3m-9.3 10h9.3m3.825-10h9.3m-9.3 10h9.3m3.825-10h9.3m-9.3 10h9.3m3.825-10h9.3m-9.3 10h9.3m3.825-10h9.3m-9.3 10h9.3m3.825-10h9.3m-9.3 10h9.3m3.825-10h9.3m-9.3 10h9.3m3.825-10h9.3m-9.3 10h9.3m3.825-10h9.3m-9.3 10h9.3m3.825-10h9.3m-9.3 10h9.3m3.825-10h9.3m-9.3 10h9.3m3.825-10h9.3m-9.3 10h9.3m3.825-10h9.3m-9.3 10h9.3m3.825-10h9.3m-9.3 10h9.3m3.825-10h9.3m-9.3 10h9.3m3.825-10h9.3m-9.3 10h9.3m3.825-10h9.3m-9.3 10h9.3m3.825-10h9.3m-9.3 10h9.3m3.825-10h9.3m-9.3 10h9.3m3.825-10h9.3m-9.3 10h9.3m3.825-10h9.3m-9.3 10h9.3m3.825-10h9.3m-9.3 10h9.3m3.825-10h9.3m-9.3 10h9.3m3.825-10h9.3m-9.3 10h9.3m3.825-10h9.3m-9.3 10h9.3m3.825-10h9.3m-9.3 10h9.3m3.825-10h9.3m-9.3 10h9.3m3.825-10h9.3m-9.3 10h9.3m3.825-10h9.3m-9.3 10h9.3m3.825-10h9.3m-9.3 10h9.3m3.825-10h9.3m-9.3 10h9.3m3.825-10h9.3m-9.3 10h9.3m3.825-10h9.3m-9.3 10h9.3m3.825-10h9.3m-9.3 10h9.3m3.825-10h9.3m-9.3 10h9.3m3.825-10h9.3m-9.3 10h9.3m3.825-10h9.3m-9.3 10h9.3m3.825-10h9.3m-9.3 10h9.3m3.825-10h9.3m-9.3 10h9.3m3.825-10h9.3m-9.3 10h9.3m3.825-10h9.3m-9.3 10h9.3M572 514.5h9.3m-9.3 10h9.3m3.825-10h9.3m-9.3 10h9.3m3.825-10h9.3m-9.3 10h9.3m3.825-10h9.3m-9.3 10h9.3m3.825-10h9.3m-9.3 10h9.3m3.825-10h9.3m-9.3 10h9.3m3.825-10h9.3m-9.3 10h9.3m3.825-10h9.3m-9.3 10h9.3m3.825-10h9.3m-9.3 10h9.3m3.825-10h9.3m-9.3 10h9.3m3.825-10h9.3m-9.3 10h9.3m3.825-10h9.3m-9.3 10h9.3m3.825-10h9.3m-9.3 10h9.3m3.825-10h9.3m-9.3 10h9.3m3.825-10h9.3m-9.3 10h9.3m3.825-10h9.3m-9.3 10h9.3m3.825-10h9.3m-9.3 10h9.3m3.825-10h9.3m-9.3 10h9.3m3.825-10h9.3m-9.3 10h9.3m3.825-10h9.3m-9.3 10h9.3m3.825-10h9.3m-9.3 10h9.3m3.825-10h9.3m-9.3 10h9.3m3.825-10h9.3m-9.3 10h9.3m3.825-10h9.3m-9.3 10h9.3m3.825-10h9.3m-9.3 10h9.3m3.825-10h9.3m-9.3 10h9.3m3.825-10h9.3m-9.3 10h9.3m3.825-10h9.3m-9.3 10h9.3m3.825-10h9.3m-9.3 10h9.3m3.825-10h9.3m-9.3 10h9.3m3.825-10h9.3m-9.3 10h9.3m3.825-10h9.3m-9.3 10h9.3m3.825-10h9.3m-9.3 10h9.3m3.825-10h9.3m-9.3 10h9.3m3.825-10h9.3m-9.3 10h9.3m3.825-10h9.3m-9.3 10h9.3m3.825-10h9.3m-9.3 10h9.3m3.825-10h9.3m-9.3 10h9.3m3.825-10h9.3m-9.3 10h9.3m3.825-10h9.3m-9.3 10h9.3m3.825-10h9.3m-9.3 10h9.3m3.825-10h9.3m-9.3 10h9.3m3.825-10h9.3m-9.3 10h9.3m3.825-10h9.3m-9.3 10h9.3m3.825-10h9.3m-9.3 10h9.3m3.825-10h9.3m-9.3 10h9.3m3.825-10h9.3m-9.3 10h9.3m3.825-10h9.3m-9.3 10h9.3m3.825-10h9.3m-9.3 10h9.3m3.825-10h9.3m-9.3 10h9.3m3.825-10h9.3m-9.3 10h9.3m3.825-10h9.3m-9.3 10h9.3m3.825-10h9.3m-9.3 10h9.3m3.825-10h9.3m-9.3 10h9.3m3.825-10h9.3m-9.3 10h9.3m3.825-10h9.3m-9.3 10h9.3m3.825-10h9.3m-9.3 10h9.3m3.825-10h9.3m-9.3 10h9.3M572 537.5h9.3m-9.3 10h9.3m3.825-10h9.3m-9.3 10h9.3m3.825-10h9.3m-9.3 10h9.3m3.825-10h9.3m-9.3 10h9.3m3.825-10h9.3m-9.3 10h9.3m3.825-10h9.3m-9.3 10h9.3m3.825-10h9.3m-9.3 10h9.3m3.825-10h9.3m-9.3 10h9.3m3.825-10h9.3m-9.3 10h9.3m3.825-10h9.3m-9.3 10h9.3m3.825-10h9.3m-9.3 10h9.3m3.825-10h9.3m-9.3 10h9.3m3.825-10h9.3m-9.3 10h9.3m3.825-10h9.3m-9.3 10h9.3m3.825-10h9.3m-9.3 10h9.3m3.825-10h9.3m-9.3 10h9.3m3.825-10h9.3m-9.3 10h9.3m3.825-10h9.3m-9.3 10h9.3m3.825-10h9.3m-9.3 10h9.3m3.825-10h9.3m-9.3 10h9.3m3.825-10h9.3m-9.3 10h9.3m3.825-10h9.3m-9.3 10h9.3m3.825-10h9.3m-9.3 10h9.3m3.825-10h9.3m-9.3 10h9.3m3.825-10h9.3m-9.3 10h9.3m3.825-10h9.3m-9.3 10h9.3m3.825-10h9.3m-9.3 10h9.3m3.825-10h9.3m-9.3 10h9.3m3.825-10h9.3m-9.3 10h9.3m3.825-10h9.3m-9.3 10h9.3m3.825-10h9.3m-9.3 10h9.3m3.825-10h9.3m-9.3 10h9.3m3.825-10h9.3m-9.3 10h9.3m3.825-10h9.3m-9.3 10h9.3m3.825-10h9.3m-9.3 10h9.3m3.825-10h9.3m-9.3 10h9.3m3.825-10h9.3m-9.3 10h9.3m3.825-10h9.3m-9.3 10h9.3m3.825-10h9.3m-9.3 10h9.3m3.825-10h9.3m-9.3 10h9.3m3.825-10h9.3m-9.3 10h9.3m3.825-10h9.3m-9.3 10h9.3m3.825-10h9.3m-9.3 10h9.3m3.825-10h9.3m-9.3 10h9.3m3.825-10h9.3m-9.3 10h9.3m3.825-10h9.3m-9.3 10h9.3m3.825-10h9.3m-9.3 10h9.3m3.825-10h9.3m-9.3 10h9.3m3.825-10h9.3m-9.3 10h9.3m3.825-10h9.3m-9.3 10h9.3m3.825-10h9.3m-9.3 10h9.3m3.825-10h9.3m-9.3 10h9.3m3.825-10h9.3m-9.3 10h9.3m3.825-10h9.3m-9.3 10h9.3m3.825-10h9.3m-9.3 10h9.3m3.825-10h9.3m-9.3 10h9.3m3.825-10h9.3m-9.3 10h9.3m3.825-10h9.3m-9.3 10h9.3M572 561.5h9.3m-9.3 10h9.3m3.825-10h9.3m-9.3 10h9.3m3.825-10h9.3m-9.3 10h9.3m3.825-10h9.3m-9.3 10h9.3m3.825-10h9.3m-9.3 10h9.3m3.825-10h9.3m-9.3 10h9.3m3.825-10h9.3m-9.3 10h9.3m3.825-10h9.3m-9.3 10h9.3m3.825-10h9.3m-9.3 10h9.3m3.825-10h9.3m-9.3 10h9.3m3.825-10h9.3m-9.3 10h9.3m3.825-10h9.3m-9.3 10h9.3m3.825-10h9.3m-9.3 10h9.3m3.825-10h9.3m-9.3 10h9.3m3.825-10h9.3m-9.3 10h9.3m3.825-10h9.3m-9.3 10h9.3m3.825-10h9.3m-9.3 10h9.3m3.825-10h9.3m-9.3 10h9.3m3.825-10h9.3m-9.3 10h9.3m3.825-10h9.3m-9.3 10h9.3m3.825-10h9.3m-9.3 10h9.3m3.825-10h9.3m-9.3 10h9.3m3.825-10h9.3m-9.3 10h9.3m3.825-10h9.3m-9.3 10h9.3m3.825-10h9.3m-9.3 10h9.3m3.825-10h9.3m-9.3 10h9.3m3.825-10h9.3m-9.3 10h9.3m3.825-10h9.3m-9.3 10h9.3m3.825-10h9.3m-9.3 10h9.3m3.825-10h9.3m-9.3 10h9.3m3.825-10h9.3m-9.3 10h9.3m3.825-10h9.3m-9.3 10h9.3m3.825-10h9.3m-9.3 10h9.3m3.825-10h9.3m-9.3 10h9.3m3.825-10h9.3m-9.3 10h9.3m3.825-10h9.3m-9.3 10h9.3m3.825-10h9.3m-9.3 10h9.3m3.825-10h9.3m-9.3 10h9.3m3.825-10h9.3m-9.3 10h9.3m3.825-10h9.3m-9.3 10h9.3m3.825-10h9.3m-9.3 10h9.3m3.825-10h9.3m-9.3 10h9.3m3.825-10h9.3m-9.3 10h9.3m3.825-10h9.3m-9.3 10h9.3m3.825-10h9.3m-9.3 10h9.3m3.825-10h9.3m-9.3 10h9.3m3.825-10h9.3m-9.3 10h9.3m3.825-10h9.3m-9.3 10h9.3m3.825-10h9.3m-9.3 10h9.3m3.825-10h9.3m-9.3 10h9.3m3.825-10h9.3m-9.3 10h9.3m3.825-10h9.3m-9.3 10h9.3m3.825-10h9.3m-9.3 10h9.3m3.825-10h9.3m-9.3 10h9.3m3.825-10h9.3m-9.3 10h9.3m3.825-10h9.3m-9.3 10h9.3m3.825-10h9.3m-9.3 10h9.3m3.825-10h9.3m-9.3 10h9.3M572 585.5h9.3m-9.3 10h9.3m3.825-10h9.3m-9.3 10h9.3m3.825-10h9.3m-9.3 10h9.3m3.825-10h9.3m-9.3 10h9.3m3.825-10h9.3m-9.3 10h9.3m3.825-10h9.3m-9.3 10h9.3m3.825-10h9.3m-9.3 10h9.3m3.825-10h9.3m-9.3 10h9.3m3.825-10h9.3m-9.3 10h9.3m3.825-10h9.3m-9.3 10h9.3m3.825-10h9.3m-9.3 10h9.3m3.825-10h9.3m-9.3 10h9.3m3.825-10h9.3m-9.3 10h9.3m3.825-10h9.3m-9.3 10h9.3m3.825-10h9.3m-9.3 10h9.3m3.825-10h9.3m-9.3 10h9.3m3.825-10h9.3m-9.3 10h9.3m3.825-10h9.3m-9.3 10h9.3m3.825-10h9.3m-9.3 10h9.3m3.825-10h9.3m-9.3 10h9.3m3.825-10h9.3m-9.3 10h9.3m3.825-10h9.3m-9.3 10h9.3m3.825-10h9.3m-9.3 10h9.3m3.825-10h9.3m-9.3 10h9.3m3.825-10h9.3m-9.3 10h9.3m3.825-10h9.3m-9.3 10h9.3m3.825-10h9.3m-9.3 10h9.3m3.825-10h9.3m-9.3 10h9.3m3.825-10h9.3m-9.3 10h9.3m3.825-10h9.3m-9.3 10h9.3m3.825-10h9.3m-9.3 10h9.3m3.825-10h9.3m-9.3 10h9.3m3.825-10h9.3m-9.3 10h9.3m3.825-10h9.3m-9.3 10h9.3m3.825-10h9.3m-9.3 10h9.3m3.825-10h9.3m-9.3 10h9.3m3.825-10h9.3m-9.3 10h9.3m3.825-10h9.3m-9.3 10h9.3m3.825-10h9.3m-9.3 10h9.3m3.825-10h9.3m-9.3 10h9.3m3.825-10h9.3m-9.3 10h9.3m3.825-10h9.3m-9.3 10h9.3m3.825-10h9.3m-9.3 10h9.3m3.825-10h9.3m-9.3 10h9.3m3.825-10h9.3m-9.3 10h9.3m3.825-10h9.3m-9.3 10h9.3m3.825-10h9.3m-9.3 10h9.3m3.825-10h9.3m-9.3 10h9.3m3.825-10h9.3m-9.3 10h9.3m3.825-10h9.3m-9.3 10h9.3m3.825-10h9.3m-9.3 10h9.3m3.825-10h9.3m-9.3 10h9.3m3.825-10h9.3m-9.3 10h9.3m3.825-10h9.3m-9.3 10h9.3m3.825-10h9.3m-9.3 10h9.3m3.825-10h9.3m-9.3 10h9.3m3.825-10h9.3m-9.3 10h9.3m3.825-10h9.3m-9.3 10h9.3M572 608.5h9.3m-9.3 10h9.3m3.825-10h9.3m-9.3 10h9.3m3.825-10h9.3m-9.3 10h9.3m3.825-10h9.3m-9.3 10h9.3m3.825-10h9.3m-9.3 10h9.3m3.825-10h9.3m-9.3 10h9.3m3.825-10h9.3m-9.3 10h9.3m3.825-10h9.3m-9.3 10h9.3m3.825-10h9.3m-9.3 10h9.3m3.825-10h9.3m-9.3 10h9.3m3.825-10h9.3m-9.3 10h9.3m3.825-10h9.3m-9.3 10h9.3m3.825-10h9.3m-9.3 10h9.3m3.825-10h9.3m-9.3 10h9.3m3.825-10h9.3m-9.3 10h9.3m3.825-10h9.3m-9.3 10h9.3m3.825-10h9.3m-9.3 10h9.3m3.825-10h9.3m-9.3 10h9.3m3.825-10h9.3m-9.3 10h9.3m3.825-10h9.3m-9.3 10h9.3m3.825-10h9.3m-9.3 10h9.3m3.825-10h9.3m-9.3 10h9.3m3.825-10h9.3m-9.3 10h9.3m3.825-10h9.3m-9.3 10h9.3m3.825-10h9.3m-9.3 10h9.3m3.825-10h9.3m-9.3 10h9.3m3.825-10h9.3m-9.3 10h9.3m3.825-10h9.3m-9.3 10h9.3m3.825-10h9.3m-9.3 10h9.3m3.825-10h9.3m-9.3 10h9.3m3.825-10h9.3m-9.3 10h9.3m3.825-10h9.3m-9.3 10h9.3m3.825-10h9.3m-9.3 10h9.3m3.825-10h9.3m-9.3 10h9.3m3.825-10h9.3m-9.3 10h9.3m3.825-10h9.3m-9.3 10h9.3m3.825-10h9.3m-9.3 10h9.3m3.825-10h9.3m-9.3 10h9.3m3.825-10h9.3m-9.3 10h9.3m3.825-10h9.3m-9.3 10h9.3m3.825-10h9.3m-9.3 10h9.3m3.825-10h9.3m-9.3 10h9.3m3.825-10h9.3m-9.3 10h9.3m3.825-10h9.3m-9.3 10h9.3m3.825-10h9.3m-9.3 10h9.3m3.825-10h9.3m-9.3 10h9.3m3.825-10h9.3m-9.3 10h9.3m3.825-10h9.3m-9.3 10h9.3m3.825-10h9.3m-9.3 10h9.3m3.825-10h9.3m-9.3 10h9.3m3.825-10h9.3m-9.3 10h9.3m3.825-10h9.3m-9.3 10h9.3m3.825-10h9.3m-9.3 10h9.3m3.825-10h9.3m-9.3 10h9.3m3.825-10h9.3m-9.3 10h9.3m3.825-10h9.3m-9.3 10h9.3m3.825-10h9.3m-9.3 10h9.3m3.825-10h9.3m-9.3 10h9.3M572 632.5h9.3m-9.3 10h9.3m3.825-10h9.3m-9.3 10h9.3m3.825-10h9.3m-9.3 10h9.3m3.825-10h9.3m-9.3 10h9.3m3.825-10h9.3m-9.3 10h9.3m3.825-10h9.3m-9.3 10h9.3m3.825-10h9.3m-9.3 10h9.3m3.825-10h9.3m-9.3 10h9.3m3.825-10h9.3m-9.3 10h9.3m3.825-10h9.3m-9.3 10h9.3m3.825-10h9.3m-9.3 10h9.3m3.825-10h9.3m-9.3 10h9.3m3.825-10h9.3m-9.3 10h9.3m3.825-10h9.3m-9.3 10h9.3m3.825-10h9.3m-9.3 10h9.3m3.825-10h9.3m-9.3 10h9.3m3.825-10h9.3m-9.3 10h9.3m3.825-10h9.3m-9.3 10h9.3m3.825-10h9.3m-9.3 10h9.3m3.825-10h9.3m-9.3 10h9.3m3.825-10h9.3m-9.3 10h9.3m3.825-10h9.3m-9.3 10h9.3m3.825-10h9.3m-9.3 10h9.3m3.825-10h9.3m-9.3 10h9.3m3.825-10h9.3m-9.3 10h9.3m3.825-10h9.3m-9.3 10h9.3m3.825-10h9.3m-9.3 10h9.3m3.825-10h9.3m-9.3 10h9.3m3.825-10h9.3m-9.3 10h9.3m3.825-10h9.3m-9.3 10h9.3m3.825-10h9.3m-9.3 10h9.3m3.825-10h9.3m-9.3 10h9.3m3.825-10h9.3m-9.3 10h9.3m3.825-10h9.3m-9.3 10h9.3m3.825-10h9.3m-9.3 10h9.3m3.825-10h9.3m-9.3 10h9.3m3.825-10h9.3m-9.3 10h9.3m3.825-10h9.3m-9.3 10h9.3m3.825-10h9.3m-9.3 10h9.3m3.825-10h9.3m-9.3 10h9.3m3.825-10h9.3m-9.3 10h9.3m3.825-10h9.3m-9.3 10h9.3m3.825-10h9.3m-9.3 10h9.3m3.825-10h9.3m-9.3 10h9.3m3.825-10h9.3m-9.3 10h9.3m3.825-10h9.3m-9.3 10h9.3m3.825-10h9.3m-9.3 10h9.3m3.825-10h9.3m-9.3 10h9.3m3.825-10h9.3m-9.3 10h9.3m3.825-10h9.3m-9.3 10h9.3m3.825-10h9.3m-9.3 10h9.3m3.825-10h9.3m-9.3 10h9.3m3.825-10h9.3m-9.3 10h9.3m3.825-10h9.3m-9.3 10h9.3m3.825-10h9.3m-9.3 10h9.3m3.825-10h9.3m-9.3 10h9.3m3.825-10h9.3m-9.3 10h9.3m3.825-10h9.3m-9.3 10h9.3M572 656.5h9.3m-9.3 10h9.3m3.825-10h9.3m-9.3 10h9.3m3.825-10h9.3m-9.3 10h9.3m3.825-10h9.3m-9.3 10h9.3m3.825-10h9.3m-9.3 10h9.3m3.825-10h9.3m-9.3 10h9.3m3.825-10h9.3m-9.3 10h9.3m3.825-10h9.3m-9.3 10h9.3m3.825-10h9.3m-9.3 10h9.3m3.825-10h9.3m-9.3 10h9.3m3.825-10h9.3m-9.3 10h9.3m3.825-10h9.3m-9.3 10h9.3m3.825-10h9.3m-9.3 10h9.3m3.825-10h9.3m-9.3 10h9.3m3.825-10h9.3m-9.3 10h9.3m3.825-10h9.3m-9.3 10h9.3m3.825-10h9.3m-9.3 10h9.3m3.825-10h9.3m-9.3 10h9.3m3.825-10h9.3m-9.3 10h9.3m3.825-10h9.3m-9.3 10h9.3m3.825-10h9.3m-9.3 10h9.3m3.825-10h9.3m-9.3 10h9.3m3.825-10h9.3m-9.3 10h9.3m3.825-10h9.3m-9.3 10h9.3m3.825-10h9.3m-9.3 10h9.3m3.825-10h9.3m-9.3 10h9.3m3.825-10h9.3m-9.3 10h9.3m3.825-10h9.3m-9.3 10h9.3m3.825-10h9.3m-9.3 10h9.3m3.825-10h9.3m-9.3 10h9.3m3.825-10h9.3m-9.3 10h9.3m3.825-10h9.3m-9.3 10h9.3m3.825-10h9.3m-9.3 10h9.3m3.825-10h9.3m-9.3 10h9.3m3.825-10h9.3m-9.3 10h9.3m3.825-10h9.3m-9.3 10h9.3m3.825-10h9.3m-9.3 10h9.3m3.825-10h9.3m-9.3 10h9.3m3.825-10h9.3m-9.3 10h9.3m3.825-10h9.3m-9.3 10h9.3m3.825-10h9.3m-9.3 10h9.3m3.825-10h9.3m-9.3 10h9.3m3.825-10h9.3m-9.3 10h9.3m3.825-10h9.3m-9.3 10h9.3m3.825-10h9.3m-9.3 10h9.3m3.825-10h9.3m-9.3 10h9.3m3.825-10h9.3m-9.3 10h9.3m3.825-10h9.3m-9.3 10h9.3m3.825-10h9.3m-9.3 10h9.3m3.825-10h9.3m-9.3 10h9.3m3.825-10h9.3m-9.3 10h9.3m3.825-10h9.3m-9.3 10h9.3m3.825-10h9.3m-9.3 10h9.3m3.825-10h9.3m-9.3 10h9.3m3.825-10h9.3m-9.3 10h9.3m3.825-10h9.3m-9.3 10h9.3m3.825-10h9.3m-9.3 10h9.3m3.825-10h9.3m-9.3 10h9.3M572 679.5h9.3m-9.3 10h9.3m3.825-10h9.3m-9.3 10h9.3m3.825-10h9.3m-9.3 10h9.3m3.825-10h9.3m-9.3 10h9.3m3.825-10h9.3m-9.3 10h9.3m3.825-10h9.3m-9.3 10h9.3m3.825-10h9.3m-9.3 10h9.3m3.825-10h9.3m-9.3 10h9.3m3.825-10h9.3m-9.3 10h9.3m3.825-10h9.3m-9.3 10h9.3m3.825-10h9.3m-9.3 10h9.3m3.825-10h9.3m-9.3 10h9.3m3.825-10h9.3m-9.3 10h9.3m3.825-10h9.3m-9.3 10h9.3m3.825-10h9.3m-9.3 10h9.3m3.825-10h9.3m-9.3 10h9.3m3.825-10h9.3m-9.3 10h9.3m3.825-10h9.3m-9.3 10h9.3m3.825-10h9.3m-9.3 10h9.3m3.825-10h9.3m-9.3 10h9.3m3.825-10h9.3m-9.3 10h9.3m3.825-10h9.3m-9.3 10h9.3m3.825-10h9.3m-9.3 10h9.3m3.825-10h9.3m-9.3 10h9.3m3.825-10h9.3m-9.3 10h9.3m3.825-10h9.3m-9.3 10h9.3m3.825-10h9.3m-9.3 10h9.3m3.825-10h9.3m-9.3 10h9.3m3.825-10h9.3m-9.3 10h9.3m3.825-10h9.3m-9.3 10h9.3m3.825-10h9.3m-9.3 10h9.3m3.825-10h9.3m-9.3 10h9.3m3.825-10h9.3m-9.3 10h9.3m3.825-10h9.3m-9.3 10h9.3m3.825-10h9.3m-9.3 10h9.3m3.825-10h9.3m-9.3 10h9.3m3.825-10h9.3m-9.3 10h9.3m3.825-10h9.3m-9.3 10h9.3m3.825-10h9.3m-9.3 10h9.3m3.825-10h9.3m-9.3 10h9.3m3.825-10h9.3m-9.3 10h9.3m3.825-10h9.3m-9.3 10h9.3m3.825-10h9.3m-9.3 10h9.3m3.825-10h9.3m-9.3 10h9.3m3.825-10h9.3m-9.3 10h9.3m3.825-10h9.3m-9.3 10h9.3m3.825-10h9.3m-9.3 10h9.3m3.825-10h9.3m-9.3 10h9.3m3.825-10h9.3m-9.3 10h9.3m3.825-10h9.3m-9.3 10h9.3m3.825-10h9.3m-9.3 10h9.3m3.825-10h9.3m-9.3 10h9.3m3.825-10h9.3m-9.3 10h9.3m3.825-10h9.3m-9.3 10h9.3m3.825-10h9.3m-9.3 10h9.3m3.825-10h9.3m-9.3 10h9.3m3.825-10h9.3m-9.3 10h9.3m3.825-10h9.3m-9.3 10h9.3M572 703.5h9.3m-9.3 10h9.3m3.825-10h9.3m-9.3 10h9.3m3.825-10h9.3m-9.3 10h9.3m3.825-10h9.3m-9.3 10h9.3m3.825-10h9.3m-9.3 10h9.3m3.825-10h9.3m-9.3 10h9.3m3.825-10h9.3m-9.3 10h9.3m3.825-10h9.3m-9.3 10h9.3m3.825-10h9.3m-9.3 10h9.3m3.825-10h9.3m-9.3 10h9.3m3.825-10h9.3m-9.3 10h9.3m3.825-10h9.3m-9.3 10h9.3m3.825-10h9.3m-9.3 10h9.3m3.825-10h9.3m-9.3 10h9.3m3.825-10h9.3m-9.3 10h9.3m3.825-10h9.3m-9.3 10h9.3m3.825-10h9.3m-9.3 10h9.3m3.825-10h9.3m-9.3 10h9.3m3.825-10h9.3m-9.3 10h9.3m3.825-10h9.3m-9.3 10h9.3m3.825-10h9.3m-9.3 10h9.3m3.825-10h9.3m-9.3 10h9.3m3.825-10h9.3m-9.3 10h9.3m3.825-10h9.3m-9.3 10h9.3m3.825-10h9.3m-9.3 10h9.3m3.825-10h9.3m-9.3 10h9.3m3.825-10h9.3m-9.3 10h9.3m3.825-10h9.3m-9.3 10h9.3m3.825-10h9.3m-9.3 10h9.3m3.825-10h9.3m-9.3 10h9.3m3.825-10h9.3m-9.3 10h9.3m3.825-10h9.3m-9.3 10h9.3m3.825-10h9.3m-9.3 10h9.3m3.825-10h9.3m-9.3 10h9.3m3.825-10h9.3m-9.3 10h9.3m3.825-10h9.3m-9.3 10h9.3m3.825-10h9.3m-9.3 10h9.3m3.825-10h9.3m-9.3 10h9.3m3.825-10h9.3m-9.3 10h9.3m3.825-10h9.3m-9.3 10h9.3m3.825-10h9.3m-9.3 10h9.3m3.825-10h9.3m-9.3 10h9.3m3.825-10h9.3m-9.3 10h9.3m3.825-10h9.3m-9.3 10h9.3m3.825-10h9.3m-9.3 10h9.3m3.825-10h9.3m-9.3 10h9.3m3.825-10h9.3m-9.3 10h9.3m3.825-10h9.3m-9.3 10h9.3m3.825-10h9.3m-9.3 10h9.3m3.825-10h9.3m-9.3 10h9.3m3.825-10h9.3m-9.3 10h9.3m3.825-10h9.3m-9.3 10h9.3m3.825-10h9.3m-9.3 10h9.3m3.825-10h9.3m-9.3 10h9.3m3.825-10h9.3m-9.3 10h9.3m3.825-10h9.3m-9.3 10h9.3m3.825-10h9.3m-9.3 10h9.3m3.825-10h9.3m-9.3 10h9.3M572 727.5h9.3m-9.3 10h9.3m3.825-10h9.3m-9.3 10h9.3m3.825-10h9.3m-9.3 10h9.3m3.825-10h9.3m-9.3 10h9.3m3.825-10h9.3m-9.3 10h9.3m3.825-10h9.3m-9.3 10h9.3m3.825-10h9.3m-9.3 10h9.3m3.825-10h9.3m-9.3 10h9.3m3.825-10h9.3m-9.3 10h9.3m3.825-10h9.3m-9.3 10h9.3m3.825-10h9.3m-9.3 10h9.3m3.825-10h9.3m-9.3 10h9.3m3.825-10h9.3m-9.3 10h9.3m3.825-10h9.3m-9.3 10h9.3m3.825-10h9.3m-9.3 10h9.3m3.825-10h9.3m-9.3 10h9.3m3.825-10h9.3m-9.3 10h9.3m3.825-10h9.3m-9.3 10h9.3m3.825-10h9.3m-9.3 10h9.3m3.825-10h9.3m-9.3 10h9.3m3.825-10h9.3m-9.3 10h9.3m3.825-10h9.3m-9.3 10h9.3m3.825-10h9.3m-9.3 10h9.3m3.825-10h9.3m-9.3 10h9.3m3.825-10h9.3m-9.3 10h9.3m3.825-10h9.3m-9.3 10h9.3m3.825-10h9.3m-9.3 10h9.3m3.825-10h9.3m-9.3 10h9.3m3.825-10h9.3m-9.3 10h9.3m3.825-10h9.3m-9.3 10h9.3m3.825-10h9.3m-9.3 10h9.3m3.825-10h9.3m-9.3 10h9.3m3.825-10h9.3m-9.3 10h9.3m3.825-10h9.3m-9.3 10h9.3m3.825-10h9.3m-9.3 10h9.3m3.825-10h9.3m-9.3 10h9.3m3.825-10h9.3m-9.3 10h9.3m3.825-10h9.3m-9.3 10h9.3m3.825-10h9.3m-9.3 10h9.3m3.825-10h9.3m-9.3 10h9.3m3.825-10h9.3m-9.3 10h9.3m3.825-10h9.3m-9.3 10h9.3m3.825-10h9.3m-9.3 10h9.3m3.825-10h9.3m-9.3 10h9.3m3.825-10h9.3m-9.3 10h9.3m3.825-10h9.3m-9.3 10h9.3m3.825-10h9.3m-9.3 10h9.3m3.825-10h9.3m-9.3 10h9.3m3.825-10h9.3m-9.3 10h9.3m3.825-10h9.3m-9.3 10h9.3m3.825-10h9.3m-9.3 10h9.3m3.825-10h9.3m-9.3 10h9.3m3.825-10h9.3m-9.3 10h9.3m3.825-10h9.3m-9.3 10h9.3m3.825-10h9.3m-9.3 10h9.3m3.825-10h9.3m-9.3 10h9.3m3.825-10h9.3m-9.3 10h9.3m3.825-10h9.3m-9.3 10h9.3M572 750.5h9.3m-9.3 10h9.3m3.825-10h9.3m-9.3 10h9.3m3.825-10h9.3m-9.3 10h9.3m3.825-10h9.3m-9.3 10h9.3m3.825-10h9.3m-9.3 10h9.3m3.825-10h9.3m-9.3 10h9.3m3.825-10h9.3m-9.3 10h9.3m3.825-10h9.3m-9.3 10h9.3m3.825-10h9.3m-9.3 10h9.3m3.825-10h9.3m-9.3 10h9.3m3.825-10h9.3m-9.3 10h9.3m3.825-10h9.3m-9.3 10h9.3m3.825-10h9.3m-9.3 10h9.3m3.825-10h9.3m-9.3 10h9.3m3.825-10h9.3m-9.3 10h9.3m3.825-10h9.3m-9.3 10h9.3m3.825-10h9.3m-9.3 10h9.3m3.825-10h9.3m-9.3 10h9.3m3.825-10h9.3m-9.3 10h9.3m3.825-10h9.3m-9.3 10h9.3m3.825-10h9.3m-9.3 10h9.3m3.825-10h9.3m-9.3 10h9.3m3.825-10h9.3m-9.3 10h9.3m3.825-10h9.3m-9.3 10h9.3m3.825-10h9.3m-9.3 10h9.3m3.825-10h9.3m-9.3 10h9.3m3.825-10h9.3m-9.3 10h9.3m3.825-10h9.3m-9.3 10h9.3m3.825-10h9.3m-9.3 10h9.3m3.825-10h9.3m-9.3 10h9.3m3.825-10h9.3m-9.3 10h9.3m3.825-10h9.3m-9.3 10h9.3m3.825-10h9.3m-9.3 10h9.3m3.825-10h9.3m-9.3 10h9.3m3.825-10h9.3m-9.3 10h9.3m3.825-10h9.3m-9.3 10h9.3m3.825-10h9.3m-9.3 10h9.3m3.825-10h9.3m-9.3 10h9.3m3.825-10h9.3m-9.3 10h9.3m3.825-10h9.3m-9.3 10h9.3m3.825-10h9.3m-9.3 10h9.3m3.825-10h9.3m-9.3 10h9.3m3.825-10h9.3m-9.3 10h9.3m3.825-10h9.3m-9.3 10h9.3m3.825-10h9.3m-9.3 10h9.3m3.825-10h9.3m-9.3 10h9.3m3.825-10h9.3m-9.3 10h9.3m3.825-10h9.3m-9.3 10h9.3m3.825-10h9.3m-9.3 10h9.3m3.825-10h9.3m-9.3 10h9.3m3.825-10h9.3m-9.3 10h9.3m3.825-10h9.3m-9.3 10h9.3m3.825-10h9.3m-9.3 10h9.3m3.825-10h9.3m-9.3 10h9.3m3.825-10h9.3m-9.3 10h9.3m3.825-10h9.3m-9.3 10h9.3m3.825-10h9.3m-9.3 10h9.3m3.825-10h9.3m-9.3 10h9.3M572 774.5h9.3m-9.3 10h9.3m3.825-10h9.3m-9.3 10h9.3m3.825-10h9.3m-9.3 10h9.3m3.825-10h9.3m-9.3 10h9.3m3.825-10h9.3m-9.3 10h9.3m3.825-10h9.3m-9.3 10h9.3m3.825-10h9.3m-9.3 10h9.3m3.825-10h9.3m-9.3 10h9.3m3.825-10h9.3m-9.3 10h9.3m3.825-10h9.3m-9.3 10h9.3m3.825-10h9.3m-9.3 10h9.3m3.825-10h9.3m-9.3 10h9.3m3.825-10h9.3m-9.3 10h9.3m3.825-10h9.3m-9.3 10h9.3m3.825-10h9.3m-9.3 10h9.3m3.825-10h9.3m-9.3 10h9.3m3.825-10h9.3m-9.3 10h9.3m3.825-10h9.3m-9.3 10h9.3m3.825-10h9.3m-9.3 10h9.3m3.825-10h9.3m-9.3 10h9.3m3.825-10h9.3m-9.3 10h9.3m3.825-10h9.3m-9.3 10h9.3m3.825-10h9.3m-9.3 10h9.3m3.825-10h9.3m-9.3 10h9.3m3.825-10h9.3m-9.3 10h9.3m3.825-10h9.3m-9.3 10h9.3m3.825-10h9.3m-9.3 10h9.3m3.825-10h9.3m-9.3 10h9.3m3.825-10h9.3m-9.3 10h9.3m3.825-10h9.3m-9.3 10h9.3m3.825-10h9.3m-9.3 10h9.3m3.825-10h9.3m-9.3 10h9.3m3.825-10h9.3m-9.3 10h9.3m3.825-10h9.3m-9.3 10h9.3m3.825-10h9.3m-9.3 10h9.3m3.825-10h9.3m-9.3 10h9.3m3.825-10h9.3m-9.3 10h9.3m3.825-10h9.3m-9.3 10h9.3m3.825-10h9.3m-9.3 10h9.3m3.825-10h9.3m-9.3 10h9.3m3.825-10h9.3m-9.3 10h9.3m3.825-10h9.3m-9.3 10h9.3m3.825-10h9.3m-9.3 10h9.3m3.825-10h9.3m-9.3 10h9.3m3.825-10h9.3m-9.3 10h9.3m3.825-10h9.3m-9.3 10h9.3m3.825-10h9.3m-9.3 10h9.3m3.825-10h9.3m-9.3 10h9.3m3.825-10h9.3m-9.3 10h9.3m3.825-10h9.3m-9.3 10h9.3m3.825-10h9.3m-9.3 10h9.3m3.825-10h9.3m-9.3 10h9.3m3.825-10h9.3m-9.3 10h9.3m3.825-10h9.3m-9.3 10h9.3m3.825-10h9.3m-9.3 10h9.3m3.825-10h9.3m-9.3 10h9.3m3.825-10h9.3m-9.3 10h9.3m3.825-10h9.3m-9.3 10h9.3M572 797.5h9.3m-9.3 10h9.3m3.825-10h9.3m-9.3 10h9.3m3.825-10h9.3m-9.3 10h9.3m3.825-10h9.3m-9.3 10h9.3m3.825-10h9.3m-9.3 10h9.3m3.825-10h9.3m-9.3 10h9.3m3.825-10h9.3m-9.3 10h9.3m3.825-10h9.3m-9.3 10h9.3m3.825-10h9.3m-9.3 10h9.3m3.825-10h9.3m-9.3 10h9.3m3.825-10h9.3m-9.3 10h9.3m3.825-10h9.3m-9.3 10h9.3m3.825-10h9.3m-9.3 10h9.3m3.825-10h9.3m-9.3 10h9.3m3.825-10h9.3m-9.3 10h9.3m3.825-10h9.3m-9.3 10h9.3m3.825-10h9.3m-9.3 10h9.3m3.825-10h9.3m-9.3 10h9.3m3.825-10h9.3m-9.3 10h9.3m3.825-10h9.3m-9.3 10h9.3m3.825-10h9.3m-9.3 10h9.3m3.825-10h9.3m-9.3 10h9.3m3.825-10h9.3m-9.3 10h9.3m3.825-10h9.3m-9.3 10h9.3m3.825-10h9.3m-9.3 10h9.3m3.825-10h9.3m-9.3 10h9.3m3.825-10h9.3m-9.3 10h9.3m3.825-10h9.3m-9.3 10h9.3m3.825-10h9.3m-9.3 10h9.3m3.825-10h9.3m-9.3 10h9.3m3.825-10h9.3m-9.3 10h9.3m3.825-10h9.3m-9.3 10h9.3m3.825-10h9.3m-9.3 10h9.3m3.825-10h9.3m-9.3 10h9.3m3.825-10h9.3m-9.3 10h9.3m3.825-10h9.3m-9.3 10h9.3m3.825-10h9.3m-9.3 10h9.3m3.825-10h9.3m-9.3 10h9.3m3.825-10h9.3m-9.3 10h9.3m3.825-10h9.3m-9.3 10h9.3m3.825-10h9.3m-9.3 10h9.3m3.825-10h9.3m-9.3 10h9.3m3.825-10h9.3m-9.3 10h9.3m3.825-10h9.3m-9.3 10h9.3m3.825-10h9.3m-9.3 10h9.3m3.825-10h9.3m-9.3 10h9.3m3.825-10h9.3m-9.3 10h9.3m3.825-10h9.3m-9.3 10h9.3m3.825-10h9.3m-9.3 10h9.3m3.825-10h9.3m-9.3 10h9.3m3.825-10h9.3m-9.3 10h9.3m3.825-10h9.3m-9.3 10h9.3m3.825-10h9.3m-9.3 10h9.3m3.825-10h9.3m-9.3 10h9.3m3.825-10h9.3m-9.3 10h9.3m3.825-10h9.3m-9.3 10h9.3m3.825-10h9.3m-9.3 10h9.3m3.825-10h9.3m-9.3 10h9.3M572 821.5h9.3m-9.3 10h9.3m3.825-10h9.3m-9.3 10h9.3m3.825-10h9.3m-9.3 10h9.3m3.825-10h9.3m-9.3 10h9.3m3.825-10h9.3m-9.3 10h9.3m3.825-10h9.3m-9.3 10h9.3m3.825-10h9.3m-9.3 10h9.3m3.825-10h9.3m-9.3 10h9.3m3.825-10h9.3m-9.3 10h9.3m3.825-10h9.3m-9.3 10h9.3m3.825-10h9.3m-9.3 10h9.3m3.825-10h9.3m-9.3 10h9.3m3.825-10h9.3m-9.3 10h9.3m3.825-10h9.3m-9.3 10h9.3m3.825-10h9.3m-9.3 10h9.3m3.825-10h9.3m-9.3 10h9.3m3.825-10h9.3m-9.3 10h9.3m3.825-10h9.3m-9.3 10h9.3m3.825-10h9.3m-9.3 10h9.3m3.825-10h9.3m-9.3 10h9.3m3.825-10h9.3m-9.3 10h9.3m3.825-10h9.3m-9.3 10h9.3m3.825-10h9.3m-9.3 10h9.3m3.825-10h9.3m-9.3 10h9.3m3.825-10h9.3m-9.3 10h9.3m3.825-10h9.3m-9.3 10h9.3m3.825-10h9.3m-9.3 10h9.3m3.825-10h9.3m-9.3 10h9.3m3.825-10h9.3m-9.3 10h9.3m3.825-10h9.3m-9.3 10h9.3m3.825-10h9.3m-9.3 10h9.3m3.825-10h9.3m-9.3 10h9.3m3.825-10h9.3m-9.3 10h9.3m3.825-10h9.3m-9.3 10h9.3m3.825-10h9.3m-9.3 10h9.3m3.825-10h9.3m-9.3 10h9.3m3.825-10h9.3m-9.3 10h9.3m3.825-10h9.3m-9.3 10h9.3m3.825-10h9.3m-9.3 10h9.3m3.825-10h9.3m-9.3 10h9.3m3.825-10h9.3m-9.3 10h9.3m3.825-10h9.3m-9.3 10h9.3m3.825-10h9.3m-9.3 10h9.3m3.825-10h9.3m-9.3 10h9.3m3.825-10h9.3m-9.3 10h9.3m3.825-10h9.3m-9.3 10h9.3m3.825-10h9.3m-9.3 10h9.3m3.825-10h9.3m-9.3 10h9.3m3.825-10h9.3m-9.3 10h9.3m3.825-10h9.3m-9.3 10h9.3m3.825-10h9.3m-9.3 10h9.3m3.825-10h9.3m-9.3 10h9.3m3.825-10h9.3m-9.3 10h9.3m3.825-10h9.3m-9.3 10h9.3m3.825-10h9.3m-9.3 10h9.3m3.825-10h9.3m-9.3 10h9.3m3.825-10h9.3m-9.3 10h9.3m3.825-10h9.3m-9.3 10h9.3M572 845.5h9.3m-9.3 10h9.3m3.825-10h9.3m-9.3 10h9.3m3.825-10h9.3m-9.3 10h9.3m3.825-10h9.3m-9.3 10h9.3m3.825-10h9.3m-9.3 10h9.3m3.825-10h9.3m-9.3 10h9.3m3.825-10h9.3m-9.3 10h9.3m3.825-10h9.3m-9.3 10h9.3m3.825-10h9.3m-9.3 10h9.3m3.825-10h9.3m-9.3 10h9.3m3.825-10h9.3m-9.3 10h9.3m3.825-10h9.3m-9.3 10h9.3m3.825-10h9.3m-9.3 10h9.3m3.825-10h9.3m-9.3 10h9.3m3.825-10h9.3m-9.3 10h9.3m3.825-10h9.3m-9.3 10h9.3m3.825-10h9.3m-9.3 10h9.3m3.825-10h9.3m-9.3 10h9.3m3.825-10h9.3m-9.3 10h9.3m3.825-10h9.3m-9.3 10h9.3m3.825-10h9.3m-9.3 10h9.3m3.825-10h9.3m-9.3 10h9.3m3.825-10h9.3m-9.3 10h9.3m3.825-10h9.3m-9.3 10h9.3m3.825-10h9.3m-9.3 10h9.3m3.825-10h9.3m-9.3 10h9.3m3.825-10h9.3m-9.3 10h9.3m3.825-10h9.3m-9.3 10h9.3m3.825-10h9.3m-9.3 10h9.3m3.825-10h9.3m-9.3 10h9.3m3.825-10h9.3m-9.3 10h9.3m3.825-10h9.3m-9.3 10h9.3m3.825-10h9.3m-9.3 10h9.3m3.825-10h9.3m-9.3 10h9.3m3.825-10h9.3m-9.3 10h9.3m3.825-10h9.3m-9.3 10h9.3m3.825-10h9.3m-9.3 10h9.3m3.825-10h9.3m-9.3 10h9.3m3.825-10h9.3m-9.3 10h9.3m3.825-10h9.3m-9.3 10h9.3m3.825-10h9.3m-9.3 10h9.3m3.825-10h9.3m-9.3 10h9.3m3.825-10h9.3m-9.3 10h9.3m3.825-10h9.3m-9.3 10h9.3m3.825-10h9.3m-9.3 10h9.3m3.825-10h9.3m-9.3 10h9.3m3.825-10h9.3m-9.3 10h9.3m3.825-10h9.3m-9.3 10h9.3m3.825-10h9.3m-9.3 10h9.3m3.825-10h9.3m-9.3 10h9.3m3.825-10h9.3m-9.3 10h9.3m3.825-10h9.3m-9.3 10h9.3m3.825-10h9.3m-9.3 10h9.3m3.825-10h9.3m-9.3 10h9.3m3.825-10h9.3m-9.3 10h9.3m3.825-10h9.3m-9.3 10h9.3m3.825-10h9.3m-9.3 10h9.3m3.825-10h9.3m-9.3 10h9.3M572 868.5h9.3m-9.3 10h9.3m3.825-10h9.3m-9.3 10h9.3m3.825-10h9.3m-9.3 10h9.3m3.825-10h9.3m-9.3 10h9.3m3.825-10h9.3m-9.3 10h9.3m3.825-10h9.3m-9.3 10h9.3m3.825-10h9.3m-9.3 10h9.3m3.825-10h9.3m-9.3 10h9.3m3.825-10h9.3m-9.3 10h9.3m3.825-10h9.3m-9.3 10h9.3m3.825-10h9.3m-9.3 10h9.3m3.825-10h9.3m-9.3 10h9.3m3.825-10h9.3m-9.3 10h9.3m3.825-10h9.3m-9.3 10h9.3m3.825-10h9.3m-9.3 10h9.3m3.825-10h9.3m-9.3 10h9.3m3.825-10h9.3m-9.3 10h9.3m3.825-10h9.3m-9.3 10h9.3m3.825-10h9.3m-9.3 10h9.3m3.825-10h9.3m-9.3 10h9.3m3.825-10h9.3m-9.3 10h9.3m3.825-10h9.3m-9.3 10h9.3m3.825-10h9.3m-9.3 10h9.3m3.825-10h9.3m-9.3 10h9.3m3.825-10h9.3m-9.3 10h9.3m3.825-10h9.3m-9.3 10h9.3m3.825-10h9.3m-9.3 10h9.3m3.825-10h9.3m-9.3 10h9.3m3.825-10h9.3m-9.3 10h9.3m3.825-10h9.3m-9.3 10h9.3m3.825-10h9.3m-9.3 10h9.3m3.825-10h9.3m-9.3 10h9.3m3.825-10h9.3m-9.3 10h9.3m3.825-10h9.3m-9.3 10h9.3m3.825-10h9.3m-9.3 10h9.3m3.825-10h9.3m-9.3 10h9.3m3.825-10h9.3m-9.3 10h9.3m3.825-10h9.3m-9.3 10h9.3m3.825-10h9.3m-9.3 10h9.3m3.825-10h9.3m-9.3 10h9.3m3.825-10h9.3m-9.3 10h9.3m3.825-10h9.3m-9.3 10h9.3m3.825-10h9.3m-9.3 10h9.3m3.825-10h9.3m-9.3 10h9.3m3.825-10h9.3m-9.3 10h9.3m3.825-10h9.3m-9.3 10h9.3m3.825-10h9.3m-9.3 10h9.3m3.825-10h9.3m-9.3 10h9.3m3.825-10h9.3m-9.3 10h9.3m3.825-10h9.3m-9.3 10h9.3m3.825-10h9.3m-9.3 10h9.3m3.825-10h9.3m-9.3 10h9.3m3.825-10h9.3m-9.3 10h9.3m3.825-10h9.3m-9.3 10h9.3m3.825-10h9.3m-9.3 10h9.3m3.825-10h9.3m-9.3 10h9.3m3.825-10h9.3m-9.3 10h9.3m3.825-10h9.3m-9.3 10h9.3M572 892.5h9.3m-9.3 10h9.3m3.825-10h9.3m-9.3 10h9.3m3.825-10h9.3m-9.3 10h9.3m3.825-10h9.3m-9.3 10h9.3m3.825-10h9.3m-9.3 10h9.3m3.825-10h9.3m-9.3 10h9.3m3.825-10h9.3m-9.3 10h9.3m3.825-10h9.3m-9.3 10h9.3m3.825-10h9.3m-9.3 10h9.3m3.825-10h9.3m-9.3 10h9.3m3.825-10h9.3m-9.3 10h9.3m3.825-10h9.3m-9.3 10h9.3m3.825-10h9.3m-9.3 10h9.3m3.825-10h9.3m-9.3 10h9.3m3.825-10h9.3m-9.3 10h9.3m3.825-10h9.3m-9.3 10h9.3m3.825-10h9.3m-9.3 10h9.3m3.825-10h9.3m-9.3 10h9.3m3.825-10h9.3m-9.3 10h9.3m3.825-10h9.3m-9.3 10h9.3m3.825-10h9.3m-9.3 10h9.3m3.825-10h9.3m-9.3 10h9.3m3.825-10h9.3m-9.3 10h9.3m3.825-10h9.3m-9.3 10h9.3m3.825-10h9.3m-9.3 10h9.3m3.825-10h9.3m-9.3 10h9.3m3.825-10h9.3m-9.3 10h9.3m3.825-10h9.3m-9.3 10h9.3m3.825-10h9.3m-9.3 10h9.3m3.825-10h9.3m-9.3 10h9.3m3.825-10h9.3m-9.3 10h9.3m3.825-10h9.3m-9.3 10h9.3m3.825-10h9.3m-9.3 10h9.3m3.825-10h9.3m-9.3 10h9.3m3.825-10h9.3m-9.3 10h9.3m3.825-10h9.3m-9.3 10h9.3m3.825-10h9.3m-9.3 10h9.3m3.825-10h9.3m-9.3 10h9.3m3.825-10h9.3m-9.3 10h9.3m3.825-10h9.3m-9.3 10h9.3m3.825-10h9.3m-9.3 10h9.3m3.825-10h9.3m-9.3 10h9.3m3.825-10h9.3m-9.3 10h9.3m3.825-10h9.3m-9.3 10h9.3m3.825-10h9.3m-9.3 10h9.3m3.825-10h9.3m-9.3 10h9.3m3.825-10h9.3m-9.3 10h9.3m3.825-10h9.3m-9.3 10h9.3m3.825-10h9.3m-9.3 10h9.3m3.825-10h9.3m-9.3 10h9.3m3.825-10h9.3m-9.3 10h9.3m3.825-10h9.3m-9.3 10h9.3m3.825-10h9.3m-9.3 10h9.3m3.825-10h9.3m-9.3 10h9.3m3.825-10h9.3m-9.3 10h9.3m3.825-10h9.3m-9.3 10h9.3m3.825-10h9.3m-9.3 10h9.3m3.825-10h9.3m-9.3 10h9.3M572 916.5h9.3m-9.3 10h9.3m3.825-10h9.3m-9.3 10h9.3m3.825-10h9.3m-9.3 10h9.3m3.825-10h9.3m-9.3 10h9.3m3.825-10h9.3m-9.3 10h9.3m3.825-10h9.3m-9.3 10h9.3m3.825-10h9.3m-9.3 10h9.3m3.825-10h9.3m-9.3 10h9.3m3.825-10h9.3m-9.3 10h9.3m3.825-10h9.3m-9.3 10h9.3m3.825-10h9.3m-9.3 10h9.3m3.825-10h9.3m-9.3 10h9.3m3.825-10h9.3m-9.3 10h9.3m3.825-10h9.3m-9.3 10h9.3m3.825-10h9.3m-9.3 10h9.3m3.825-10h9.3m-9.3 10h9.3m3.825-10h9.3m-9.3 10h9.3m3.825-10h9.3m-9.3 10h9.3m3.825-10h9.3m-9.3 10h9.3m3.825-10h9.3m-9.3 10h9.3m3.825-10h9.3m-9.3 10h9.3m3.825-10h9.3m-9.3 10h9.3m3.825-10h9.3m-9.3 10h9.3m3.825-10h9.3m-9.3 10h9.3m3.825-10h9.3m-9.3 10h9.3m3.825-10h9.3m-9.3 10h9.3m3.825-10h9.3m-9.3 10h9.3m3.825-10h9.3m-9.3 10h9.3m3.825-10h9.3m-9.3 10h9.3m3.825-10h9.3m-9.3 10h9.3m3.825-10h9.3m-9.3 10h9.3m3.825-10h9.3m-9.3 10h9.3m3.825-10h9.3m-9.3 10h9.3m3.825-10h9.3m-9.3 10h9.3m3.825-10h9.3m-9.3 10h9.3m3.825-10h9.3m-9.3 10h9.3m3.825-10h9.3m-9.3 10h9.3m3.825-10h9.3m-9.3 10h9.3m3.825-10h9.3m-9.3 10h9.3m3.825-10h9.3m-9.3 10h9.3m3.825-10h9.3m-9.3 10h9.3m3.825-10h9.3m-9.3 10h9.3m3.825-10h9.3m-9.3 10h9.3m3.825-10h9.3m-9.3 10h9.3m3.825-10h9.3m-9.3 10h9.3m3.825-10h9.3m-9.3 10h9.3m3.825-10h9.3m-9.3 10h9.3m3.825-10h9.3m-9.3 10h9.3m3.825-10h9.3m-9.3 10h9.3m3.825-10h9.3m-9.3 10h9.3m3.825-10h9.3m-9.3 10h9.3m3.825-10h9.3m-9.3 10h9.3m3.825-10h9.3m-9.3 10h9.3m3.825-10h9.3m-9.3 10h9.3m3.825-10h9.3m-9.3 10h9.3m3.825-10h9.3m-9.3 10h9.3m3.825-10h9.3m-9.3 10h9.3m3.825-10h9.3m-9.3 10h9.3M572 939.5h9.3m-9.3 10h9.3m3.825-10h9.3m-9.3 10h9.3m3.825-10h9.3m-9.3 10h9.3m3.825-10h9.3m-9.3 10h9.3m3.825-10h9.3m-9.3 10h9.3m3.825-10h9.3m-9.3 10h9.3m3.825-10h9.3m-9.3 10h9.3m3.825-10h9.3m-9.3 10h9.3m3.825-10h9.3m-9.3 10h9.3m3.825-10h9.3m-9.3 10h9.3m3.825-10h9.3m-9.3 10h9.3m3.825-10h9.3m-9.3 10h9.3m3.825-10h9.3m-9.3 10h9.3m3.825-10h9.3m-9.3 10h9.3m3.825-10h9.3m-9.3 10h9.3m3.825-10h9.3m-9.3 10h9.3m3.825-10h9.3m-9.3 10h9.3m3.825-10h9.3m-9.3 10h9.3m3.825-10h9.3m-9.3 10h9.3m3.825-10h9.3m-9.3 10h9.3m3.825-10h9.3m-9.3 10h9.3m3.825-10h9.3m-9.3 10h9.3m3.825-10h9.3m-9.3 10h9.3m3.825-10h9.3m-9.3 10h9.3m3.825-10h9.3m-9.3 10h9.3m3.825-10h9.3m-9.3 10h9.3m3.825-10h9.3m-9.3 10h9.3m3.825-10h9.3m-9.3 10h9.3m3.825-10h9.3m-9.3 10h9.3m3.825-10h9.3m-9.3 10h9.3m3.825-10h9.3m-9.3 10h9.3m3.825-10h9.3m-9.3 10h9.3m3.825-10h9.3m-9.3 10h9.3m3.825-10h9.3m-9.3 10h9.3m3.825-10h9.3m-9.3 10h9.3m3.825-10h9.3m-9.3 10h9.3m3.825-10h9.3m-9.3 10h9.3m3.825-10h9.3m-9.3 10h9.3m3.825-10h9.3m-9.3 10h9.3m3.825-10h9.3m-9.3 10h9.3m3.825-10h9.3m-9.3 10h9.3m3.825-10h9.3m-9.3 10h9.3m3.825-10h9.3m-9.3 10h9.3m3.825-10h9.3m-9.3 10h9.3m3.825-10h9.3m-9.3 10h9.3m3.825-10h9.3m-9.3 10h9.3m3.825-10h9.3m-9.3 10h9.3m3.825-10h9.3m-9.3 10h9.3m3.825-10h9.3m-9.3 10h9.3m3.825-10h9.3m-9.3 10h9.3m3.825-10h9.3m-9.3 10h9.3m3.825-10h9.3m-9.3 10h9.3m3.825-10h9.3m-9.3 10h9.3m3.825-10h9.3m-9.3 10h9.3m3.825-10h9.3m-9.3 10h9.3m3.825-10h9.3m-9.3 10h9.3m3.825-10h9.3m-9.3 10h9.3m3.825-10h9.3m-9.3 10h9.3"/><path stroke-opacity=".27" d="M572.5 326v9m8.9-9v9m4.225-9v9m8.9-9v9m4.225-9v9m8.9-9v9m4.225-9v9m8.9-9v9m4.225-9v9m8.9-9v9m4.225-9v9m8.9-9v9m4.225-9v9m8.9-9v9m4.225-9v9m8.9-9v9m4.225-9v9m8.9-9v9m4.225-9v9m8.9-9v9m4.225-9v9m8.9-9v9m4.225-9v9m8.9-9v9m4.225-9v9m8.9-9v9m4.225-9v9m8.9-9v9m4.225-9v9m8.9-9v9m4.225-9v9m8.9-9v9m4.225-9v9m8.9-9v9m4.225-9v9m8.9-9v9m4.225-9v9m8.9-9v9m4.225-9v9m8.9-9v9m4.225-9v9m8.9-9v9m4.225-9v9m8.9-9v9m4.225-9v9m8.9-9v9m4.225-9v9m8.9-9v9m4.225-9v9m8.9-9v9m4.225-9v9m8.9-9v9m4.225-9v9m8.9-9v9m4.225-9v9m8.9-9v9m4.225-9v9m8.9-9v9m4.225-9v9m8.9-9v9m4.225-9v9m8.9-9v9m4.225-9v9m8.9-9v9m4.225-9v9m8.9-9v9m4.225-9v9m8.9-9v9m4.225-9v9m8.9-9v9m4.225-9v9m8.9-9v9m4.225-9v9m8.9-9v9m4.225-9v9m8.9-9v9m4.225-9v9m8.9-9v9m4.225-9v9m8.9-9v9m4.225-9v9m8.9-9v9m4.225-9v9m8.9-9v9m4.225-9v9m8.9-9v9m4.225-9v9m8.9-9v9m4.225-9v9m8.9-9v9m4.225-9v9m8.9-9v9m4.225-9v9m8.9-9v9m4.225-9v9m8.9-9v9m4.225-9v9m8.9-9v9m4.225-9v9m8.9-9v9m4.225-9v9m8.9-9v9m4.225-9v9m8.9-9v9m4.225-9v9m8.9-9v9m4.225-9v9m8.9-9v9m4.225-9v9m8.9-9v9m4.225-9v9m8.9-9v9m4.225-9v9m8.9-9v9m4.225-9v9m8.9-9v9M572.5 349v9m8.9-9v9m4.225-9v9m8.9-9v9m4.225-9v9m8.9-9v9m4.225-9v9m8.9-9v9m4.225-9v9m8.9-9v9m4.225-9v9m8.9-9v9m4.225-9v9m8.9-9v9m4.225-9v9m8.9-9v9m4.225-9v9m8.9-9v9m4.225-9v9m8.9-9v9m4.225-9v9m8.9-9v9m4.225-9v9m8.9-9v9m4.225-9v9m8.9-9v9m4.225-9v9m8.9-9v9m4.225-9v9m8.9-9v9m4.225-9v9m8.9-9v9m4.225-9v9m8.9-9v9m4.225-9v9m8.9-9v9m4.225-9v9m8.9-9v9m4.225-9v9m8.9-9v9m4.225-9v9m8.9-9v9m4.225-9v9m8.9-9v9m4.225-9v9m8.9-9v9m4.225-9v9m8.9-9v9m4.225-9v9m8.9-9v9m4.225-9v9m8.9-9v9m4.225-9v9m8.9-9v9m4.225-9v9m8.9-9v9m4.225-9v9m8.9-9v9m4.225-9v9m8.9-9v9m4.225-9v9m8.9-9v9m4.225-9v9m8.9-9v9m4.225-9v9m8.9-9v9m4.225-9v9m8.9-9v9m4.225-9v9m8.9-9v9m4.225-9v9m8.9-9v9m4.225-9v9m8.9-9v9m4.225-9v9m8.9-9v9m4.225-9v9m8.9-9v9m4.225-9v9m8.9-9v9m4.225-9v9m8.9-9v9m4.225-9v9m8.9-9v9m4.225-9v9m8.9-9v9m4.225-9v9m8.9-9v9m4.225-9v9m8.9-9v9m4.225-9v9m8.9-9v9m4.225-9v9m8.9-9v9m4.225-9v9m8.9-9v9m4.225-9v9m8.9-9v9m4.225-9v9m8.9-9v9m4.225-9v9m8.9-9v9m4.225-9v9m8.9-9v9m4.225-9v9m8.9-9v9m4.225-9v9m8.9-9v9m4.225-9v9m8.9-9v9m4.225-9v9m8.9-9v9m4.225-9v9m8.9-9v9m4.225-9v9m8.9-9v9M572.5 373v9m8.9-9v9m4.225-9v9m8.9-9v9m4.225-9v9m8.9-9v9m4.225-9v9m8.9-9v9m4.225-9v9m8.9-9v9m4.225-9v9m8.9-9v9m4.225-9v9m8.9-9v9m4.225-9v9m8.9-9v9m4.225-9v9m8.9-9v9m4.225-9v9m8.9-9v9m4.225-9v9m8.9-9v9m4.225-9v9m8.9-9v9m4.225-9v9m8.9-9v9m4.225-9v9m8.9-9v9m4.225-9v9m8.9-9v9m4.225-9v9m8.9-9v9m4.225-9v9m8.9-9v9m4.225-9v9m8.9-9v9m4.225-9v9m8.9-9v9m4.225-9v9m8.9-9v9m4.225-9v9m8.9-9v9m4.225-9v9m8.9-9v9m4.225-9v9m8.9-9v9m4.225-9v9m8.9-9v9m4.225-9v9m8.9-9v9m4.225-9v9m8.9-9v9m4.225-9v9m8.9-9v9m4.225-9v9m8.9-9v9m4.225-9v9m8.9-9v9m4.225-9v9m8.9-9v9m4.225-9v9m8.9-9v9m4.225-9v9m8.9-9v9m4.225-9v9m8.9-9v9m4.225-9v9m8.9-9v9m4.225-9v9m8.9-9v9m4.225-9v9m8.9-9v9m4.225-9v9m8.9-9v9m4.225-9v9m8.9-9v9m4.225-9v9m8.9-9v9m4.225-9v9m8.9-9v9m4.225-9v9m8.9-9v9m4.225-9v9m8.9-9v9m4.225-9v9m8.9-9v9m4.225-9v9m8.9-9v9m4.225-9v9m8.9-9v9m4.225-9v9m8.9-9v9m4.225-9v9m8.9-9v9m4.225-9v9m8.9-9v9m4.225-9v9m8.9-9v9m4.225-9v9m8.9-9v9m4.225-9v9m8.9-9v9m4.225-9v9m8.9-9v9m4.225-9v9m8.9-9v9m4.225-9v9m8.9-9v9m4.225-9v9m8.9-9v9m4.225-9v9m8.9-9v9m4.225-9v9m8.9-9v9m4.225-9v9m8.9-9v9M572.5 397v9m8.9-9v9m4.225-9v9m8.9-9v9m4.225-9v9m8.9-9v9m4.225-9v9m8.9-9v9m4.225-9v9m8.9-9v9m4.225-9v9m8.9-9v9m4.225-9v9m8.9-9v9m4.225-9v9m8.9-9v9m4.225-9v9m8.9-9v9m4.225-9v9m8.9-9v9m4.225-9v9m8.9-9v9m4.225-9v9m8.9-9v9m4.225-9v9m8.9-9v9m4.225-9v9m8.9-9v9m4.225-9v9m8.9-9v9m4.225-9v9m8.9-9v9m4.225-9v9m8.9-9v9m4.225-9v9m8.9-9v9m4.225-9v9m8.9-9v9m4.225-9v9m8.9-9v9m4.225-9v9m8.9-9v9m4.225-9v9m8.9-9v9m4.225-9v9m8.9-9v9m4.225-9v9m8.9-9v9m4.225-9v9m8.9-9v9m4.225-9v9m8.9-9v9m4.225-9v9m8.9-9v9m4.225-9v9m8.9-9v9m4.225-9v9m8.9-9v9m4.225-9v9m8.9-9v9m4.225-9v9m8.9-9v9m4.225-9v9m8.9-9v9m4.225-9v9m8.9-9v9m4.225-9v9m8.9-9v9m4.225-9v9m8.9-9v9m4.225-9v9m8.9-9v9m4.225-9v9m8.9-9v9m4.225-9v9m8.9-9v9m4.225-9v9m8.9-9v9m4.225-9v9m8.9-9v9m4.225-9v9m8.9-9v9m4.225-9v9m8.9-9v9m4.225-9v9m8.9-9v9m4.225-9v9m8.9-9v9m4.225-9v9m8.9-9v9m4.225-9v9m8.9-9v9m4.225-9v9m8.9-9v9m4.225-9v9m8.9-9v9m4.225-9v9m8.9-9v9m4.225-9v9m8.9-9v9m4.225-9v9m8.9-9v9m4.225-9v9m8.9-9v9m4.225-9v9m8.9-9v9m4.225-9v9m8.9-9v9m4.225-9v9m8.9-9v9m4.225-9v9m8.9-9v9m4.225-9v9m8.9-9v9m4.225-9v9m8.9-9v9M572.5 420v9m8.9-9v9m4.225-9v9m8.9-9v9m4.225-9v9m8.9-9v9m4.225-9v9m8.9-9v9m4.225-9v9m8.9-9v9m4.225-9v9m8.9-9v9m4.225-9v9m8.9-9v9m4.225-9v9m8.9-9v9m4.225-9v9m8.9-9v9m4.225-9v9m8.9-9v9m4.225-9v9m8.9-9v9m4.225-9v9m8.9-9v9m4.225-9v9m8.9-9v9m4.225-9v9m8.9-9v9m4.225-9v9m8.9-9v9m4.225-9v9m8.9-9v9m4.225-9v9m8.9-9v9m4.225-9v9m8.9-9v9m4.225-9v9m8.9-9v9m4.225-9v9m8.9-9v9m4.225-9v9m8.9-9v9m4.225-9v9m8.9-9v9m4.225-9v9m8.9-9v9m4.225-9v9m8.9-9v9m4.225-9v9m8.9-9v9m4.225-9v9m8.9-9v9m4.225-9v9m8.9-9v9m4.225-9v9m8.9-9v9m4.225-9v9m8.9-9v9m4.225-9v9m8.9-9v9m4.225-9v9m8.9-9v9m4.225-9v9m8.9-9v9m4.225-9v9m8.9-9v9m4.225-9v9m8.9-9v9m4.225-9v9m8.9-9v9m4.225-9v9m8.9-9v9m4.225-9v9m8.9-9v9m4.225-9v9m8.9-9v9m4.225-9v9m8.9-9v9m4.225-9v9m8.9-9v9m4.225-9v9m8.9-9v9m4.225-9v9m8.9-9v9m4.225-9v9m8.9-9v9m4.225-9v9m8.9-9v9m4.225-9v9m8.9-9v9m4.225-9v9m8.9-9v9m4.225-9v9m8.9-9v9m4.225-9v9m8.9-9v9m4.225-9v9m8.9-9v9m4.225-9v9m8.9-9v9m4.225-9v9m8.9-9v9m4.225-9v9m8.9-9v9m4.225-9v9m8.9-9v9m4.225-9v9m8.9-9v9m4.225-9v9m8.9-9v9m4.225-9v9m8.9-9v9m4.225-9v9m8.9-9v9m4.225-9v9m8.9-9v9M572.5 444v9m8.9-9v9m4.225-9v9m8.9-9v9m4.225-9v9m8.9-9v9m4.225-9v9m8.9-9v9m4.225-9v9m8.9-9v9m4.225-9v9m8.9-9v9m4.225-9v9m8.9-9v9m4.225-9v9m8.9-9v9m4.225-9v9m8.9-9v9m4.225-9v9m8.9-9v9m4.225-9v9m8.9-9v9m4.225-9v9m8.9-9v9m4.225-9v9m8.9-9v9m4.225-9v9m8.9-9v9m4.225-9v9m8.9-9v9m4.225-9v9m8.9-9v9m4.225-9v9m8.9-9v9m4.225-9v9m8.9-9v9m4.225-9v9m8.9-9v9m4.225-9v9m8.9-9v9m4.225-9v9m8.9-9v9m4.225-9v9m8.9-9v9m4.225-9v9m8.9-9v9m4.225-9v9m8.9-9v9m4.225-9v9m8.9-9v9m4.225-9v9m8.9-9v9m4.225-9v9m8.9-9v9m4.225-9v9m8.9-9v9m4.225-9v9m8.9-9v9m4.225-9v9m8.9-9v9m4.225-9v9m8.9-9v9m4.225-9v9m8.9-9v9m4.225-9v9m8.9-9v9m4.225-9v9m8.9-9v9m4.225-9v9m8.9-9v9m4.225-9v9m8.9-9v9m4.225-9v9m8.9-9v9m4.225-9v9m8.9-9v9m4.225-9v9m8.9-9v9m4.225-9v9m8.9-9v9m4.225-9v9m8.9-9v9m4.225-9v9m8.9-9v9m4.225-9v9m8.9-9v9m4.225-9v9m8.9-9v9m4.225-9v9m8.9-9v9m4.225-9v9m8.9-9v9m4.225-9v9m8.9-9v9m4.225-9v9m8.9-9v9m4.225-9v9m8.9-9v9m4.225-9v9m8.9-9v9m4.225-9v9m8.9-9v9m4.225-9v9m8.9-9v9m4.225-9v9m8.9-9v9m4.225-9v9m8.9-9v9m4.225-9v9m8.9-9v9m4.225-9v9m8.9-9v9m4.225-9v9m8.9-9v9m4.225-9v9m8.9-9v9M572.5 467v9m8.9-9v9m4.225-9v9m8.9-9v9m4.225-9v9m8.9-9v9m4.225-9v9m8.9-9v9m4.225-9v9m8.9-9v9m4.225-9v9m8.9-9v9m4.225-9v9m8.9-9v9m4.225-9v9m8.9-9v9m4.225-9v9m8.9-9v9m4.225-9v9m8.9-9v9m4.225-9v9m8.9-9v9m4.225-9v9m8.9-9v9m4.225-9v9m8.9-9v9m4.225-9v9m8.9-9v9m4.225-9v9m8.9-9v9m4.225-9v9m8.9-9v9m4.225-9v9m8.9-9v9m4.225-9v9m8.9-9v9m4.225-9v9m8.9-9v9m4.225-9v9m8.9-9v9m4.225-9v9m8.9-9v9m4.225-9v9m8.9-9v9m4.225-9v9m8.9-9v9m4.225-9v9m8.9-9v9m4.225-9v9m8.9-9v9m4.225-9v9m8.9-9v9m4.225-9v9m8.9-9v9m4.225-9v9m8.9-9v9m4.225-9v9m8.9-9v9m4.225-9v9m8.9-9v9m4.225-9v9m8.9-9v9m4.225-9v9m8.9-9v9m4.225-9v9m8.9-9v9m4.225-9v9m8.9-9v9m4.225-9v9m8.9-9v9m4.225-9v9m8.9-9v9m4.225-9v9m8.9-9v9m4.225-9v9m8.9-9v9m4.225-9v9m8.9-9v9m4.225-9v9m8.9-9v9m4.225-9v9m8.9-9v9m4.225-9v9m8.9-9v9m4.225-9v9m8.9-9v9m4.225-9v9m8.9-9v9m4.225-9v9m8.9-9v9m4.225-9v9m8.9-9v9m4.225-9v9m8.9-9v9m4.225-9v9m8.9-9v9m4.225-9v9m8.9-9v9m4.225-9v9m8.9-9v9m4.225-9v9m8.9-9v9m4.225-9v9m8.9-9v9m4.225-9v9m8.9-9v9m4.225-9v9m8.9-9v9m4.225-9v9m8.9-9v9m4.225-9v9m8.9-9v9m4.225-9v9m8.9-9v9m4.225-9v9m8.9-9v9M572.5 491v9m8.9-9v9m4.225-9v9m8.9-9v9m4.225-9v9m8.9-9v9m4.225-9v9m8.9-9v9m4.225-9v9m8.9-9v9m4.225-9v9m8.9-9v9m4.225-9v9m8.9-9v9m4.225-9v9m8.9-9v9m4.225-9v9m8.9-9v9m4.225-9v9m8.9-9v9m4.225-9v9m8.9-9v9m4.225-9v9m8.9-9v9m4.225-9v9m8.9-9v9m4.225-9v9m8.9-9v9m4.225-9v9m8.9-9v9m4.225-9v9m8.9-9v9m4.225-9v9m8.9-9v9m4.225-9v9m8.9-9v9m4.225-9v9m8.9-9v9m4.225-9v9m8.9-9v9m4.225-9v9m8.9-9v9m4.225-9v9m8.9-9v9m4.225-9v9m8.9-9v9m4.225-9v9m8.9-9v9m4.225-9v9m8.9-9v9m4.225-9v9m8.9-9v9m4.225-9v9m8.9-9v9m4.225-9v9m8.9-9v9m4.225-9v9m8.9-9v9m4.225-9v9m8.9-9v9m4.225-9v9m8.9-9v9m4.225-9v9m8.9-9v9m4.225-9v9m8.9-9v9m4.225-9v9m8.9-9v9m4.225-9v9m8.9-9v9m4.225-9v9m8.9-9v9m4.225-9v9m8.9-9v9m4.225-9v9m8.9-9v9m4.225-9v9m8.9-9v9m4.225-9v9m8.9-9v9m4.225-9v9m8.9-9v9m4.225-9v9m8.9-9v9m4.225-9v9m8.9-9v9m4.225-9v9m8.9-9v9m4.225-9v9m8.9-9v9m4.225-9v9m8.9-9v9m4.225-9v9m8.9-9v9m4.225-9v9m8.9-9v9m4.225-9v9m8.9-9v9m4.225-9v9m8.9-9v9m4.225-9v9m8.9-9v9m4.225-9v9m8.9-9v9m4.225-9v9m8.9-9v9m4.225-9v9m8.9-9v9m4.225-9v9m8.9-9v9m4.225-9v9m8.9-9v9m4.225-9v9m8.9-9v9m4.225-9v9m8.9-9v9M572.5 515v9m8.9-9v9m4.225-9v9m8.9-9v9m4.225-9v9m8.9-9v9m4.225-9v9m8.9-9v9m4.225-9v9m8.9-9v9m4.225-9v9m8.9-9v9m4.225-9v9m8.9-9v9m4.225-9v9m8.9-9v9m4.225-9v9m8.9-9v9m4.225-9v9m8.9-9v9m4.225-9v9m8.9-9v9m4.225-9v9m8.9-9v9m4.225-9v9m8.9-9v9m4.225-9v9m8.9-9v9m4.225-9v9m8.9-9v9m4.225-9v9m8.9-9v9m4.225-9v9m8.9-9v9m4.225-9v9m8.9-9v9m4.225-9v9m8.9-9v9m4.225-9v9m8.9-9v9m4.225-9v9m8.9-9v9m4.225-9v9m8.9-9v9m4.225-9v9m8.9-9v9m4.225-9v9m8.9-9v9m4.225-9v9m8.9-9v9m4.225-9v9m8.9-9v9m4.225-9v9m8.9-9v9m4.225-9v9m8.9-9v9m4.225-9v9m8.9-9v9m4.225-9v9m8.9-9v9m4.225-9v9m8.9-9v9m4.225-9v9m8.9-9v9m4.225-9v9m8.9-9v9m4.225-9v9m8.9-9v9m4.225-9v9m8.9-9v9m4.225-9v9m8.9-9v9m4.225-9v9m8.9-9v9m4.225-9v9m8.9-9v9m4.225-9v9m8.9-9v9m4.225-9v9m8.9-9v9m4.225-9v9m8.9-9v9m4.225-9v9m8.9-9v9m4.225-9v9m8.9-9v9m4.225-9v9m8.9-9v9m4.225-9v9m8.9-9v9m4.225-9v9m8.9-9v9m4.225-9v9m8.9-9v9m4.225-9v9m8.9-9v9m4.225-9v9m8.9-9v9m4.225-9v9m8.9-9v9m4.225-9v9m8.9-9v9m4.225-9v9m8.9-9v9m4.225-9v9m8.9-9v9m4.225-9v9m8.9-9v9m4.225-9v9m8.9-9v9m4.225-9v9m8.9-9v9m4.225-9v9m8.9-9v9m4.225-9v9m8.9-9v9M572.5 538v9m8.9-9v9m4.225-9v9m8.9-9v9m4.225-9v9m8.9-9v9m4.225-9v9m8.9-9v9m4.225-9v9m8.9-9v9m4.225-9v9m8.9-9v9m4.225-9v9m8.9-9v9m4.225-9v9m8.9-9v9m4.225-9v9m8.9-9v9m4.225-9v9m8.9-9v9m4.225-9v9m8.9-9v9m4.225-9v9m8.9-9v9m4.225-9v9m8.9-9v9m4.225-9v9m8.9-9v9m4.225-9v9m8.9-9v9m4.225-9v9m8.9-9v9m4.225-9v9m8.9-9v9m4.225-9v9m8.9-9v9m4.225-9v9m8.9-9v9m4.225-9v9m8.9-9v9m4.225-9v9m8.9-9v9m4.225-9v9m8.9-9v9m4.225-9v9m8.9-9v9m4.225-9v9m8.9-9v9m4.225-9v9m8.9-9v9m4.225-9v9m8.9-9v9m4.225-9v9m8.9-9v9m4.225-9v9m8.9-9v9m4.225-9v9m8.9-9v9m4.225-9v9m8.9-9v9m4.225-9v9m8.9-9v9m4.225-9v9m8.9-9v9m4.225-9v9m8.9-9v9m4.225-9v9m8.9-9v9m4.225-9v9m8.9-9v9m4.225-9v9m8.9-9v9m4.225-9v9m8.9-9v9m4.225-9v9m8.9-9v9m4.225-9v9m8.9-9v9m4.225-9v9m8.9-9v9m4.225-9v9m8.9-9v9m4.225-9v9m8.9-9v9m4.225-9v9m8.9-9v9m4.225-9v9m8.9-9v9m4.225-9v9m8.9-9v9m4.225-9v9m8.9-9v9m4.225-9v9m8.9-9v9m4.225-9v9m8.9-9v9m4.225-9v9m8.9-9v9m4.225-9v9m8.9-9v9m4.225-9v9m8.9-9v9m4.225-9v9m8.9-9v9m4.225-9v9m8.9-9v9m4.225-9v9m8.9-9v9m4.225-9v9m8.9-9v9m4.225-9v9m8.9-9v9m4.225-9v9m8.9-9v9m4.225-9v9m8.9-9v9M572.5 562v9m8.9-9v9m4.225-9v9m8.9-9v9m4.225-9v9m8.9-9v9m4.225-9v9m8.9-9v9m4.225-9v9m8.9-9v9m4.225-9v9m8.9-9v9m4.225-9v9m8.9-9v9m4.225-9v9m8.9-9v9m4.225-9v9m8.9-9v9m4.225-9v9m8.9-9v9m4.225-9v9m8.9-9v9m4.225-9v9m8.9-9v9m4.225-9v9m8.9-9v9m4.225-9v9m8.9-9v9m4.225-9v9m8.9-9v9m4.225-9v9m8.9-9v9m4.225-9v9m8.9-9v9m4.225-9v9m8.9-9v9m4.225-9v9m8.9-9v9m4.225-9v9m8.9-9v9m4.225-9v9m8.9-9v9m4.225-9v9m8.9-9v9m4.225-9v9m8.9-9v9m4.225-9v9m8.9-9v9m4.225-9v9m8.9-9v9m4.225-9v9m8.9-9v9m4.225-9v9m8.9-9v9m4.225-9v9m8.9-9v9m4.225-9v9m8.9-9v9m4.225-9v9m8.9-9v9m4.225-9v9m8.9-9v9m4.225-9v9m8.9-9v9m4.225-9v9m8.9-9v9m4.225-9v9m8.9-9v9m4.225-9v9m8.9-9v9m4.225-9v9m8.9-9v9m4.225-9v9m8.9-9v9m4.225-9v9m8.9-9v9m4.225-9v9m8.9-9v9m4.225-9v9m8.9-9v9m4.225-9v9m8.9-9v9m4.225-9v9m8.9-9v9m4.225-9v9m8.9-9v9m4.225-9v9m8.9-9v9m4.225-9v9m8.9-9v9m4.225-9v9m8.9-9v9m4.225-9v9m8.9-9v9m4.225-9v9m8.9-9v9m4.225-9v9m8.9-9v9m4.225-9v9m8.9-9v9m4.225-9v9m8.9-9v9m4.225-9v9m8.9-9v9m4.225-9v9m8.9-9v9m4.225-9v9m8.9-9v9m4.225-9v9m8.9-9v9m4.225-9v9m8.9-9v9m4.225-9v9m8.9-9v9m4.225-9v9m8.9-9v9M572.5 586v9m8.9-9v9m4.225-9v9m8.9-9v9m4.225-9v9m8.9-9v9m4.225-9v9m8.9-9v9m4.225-9v9m8.9-9v9m4.225-9v9m8.9-9v9m4.225-9v9m8.9-9v9m4.225-9v9m8.9-9v9m4.225-9v9m8.9-9v9m4.225-9v9m8.9-9v9m4.225-9v9m8.9-9v9m4.225-9v9m8.9-9v9m4.225-9v9m8.9-9v9m4.225-9v9m8.9-9v9m4.225-9v9m8.9-9v9m4.225-9v9m8.9-9v9m4.225-9v9m8.9-9v9m4.225-9v9m8.9-9v9m4.225-9v9m8.9-9v9m4.225-9v9m8.9-9v9m4.225-9v9m8.9-9v9m4.225-9v9m8.9-9v9m4.225-9v9m8.9-9v9m4.225-9v9m8.9-9v9m4.225-9v9m8.9-9v9m4.225-9v9m8.9-9v9m4.225-9v9m8.9-9v9m4.225-9v9m8.9-9v9m4.225-9v9m8.9-9v9m4.225-9v9m8.9-9v9m4.225-9v9m8.9-9v9m4.225-9v9m8.9-9v9m4.225-9v9m8.9-9v9m4.225-9v9m8.9-9v9m4.225-9v9m8.9-9v9m4.225-9v9m8.9-9v9m4.225-9v9m8.9-9v9m4.225-9v9m8.9-9v9m4.225-9v9m8.9-9v9m4.225-9v9m8.9-9v9m4.225-9v9m8.9-9v9m4.225-9v9m8.9-9v9m4.225-9v9m8.9-9v9m4.225-9v9m8.9-9v9m4.225-9v9m8.9-9v9m4.225-9v9m8.9-9v9m4.225-9v9m8.9-9v9m4.225-9v9m8.9-9v9m4.225-9v9m8.9-9v9m4.225-9v9m8.9-9v9m4.225-9v9m8.9-9v9m4.225-9v9m8.9-9v9m4.225-9v9m8.9-9v9m4.225-9v9m8.9-9v9m4.225-9v9m8.9-9v9m4.225-9v9m8.9-9v9m4.225-9v9m8.9-9v9m4.225-9v9m8.9-9v9M572.5 609v9m8.9-9v9m4.225-9v9m8.9-9v9m4.225-9v9m8.9-9v9m4.225-9v9m8.9-9v9m4.225-9v9m8.9-9v9m4.225-9v9m8.9-9v9m4.225-9v9m8.9-9v9m4.225-9v9m8.9-9v9m4.225-9v9m8.9-9v9m4.225-9v9m8.9-9v9m4.225-9v9m8.9-9v9m4.225-9v9m8.9-9v9m4.225-9v9m8.9-9v9m4.225-9v9m8.9-9v9m4.225-9v9m8.9-9v9m4.225-9v9m8.9-9v9m4.225-9v9m8.9-9v9m4.225-9v9m8.9-9v9m4.225-9v9m8.9-9v9m4.225-9v9m8.9-9v9m4.225-9v9m8.9-9v9m4.225-9v9m8.9-9v9m4.225-9v9m8.9-9v9m4.225-9v9m8.9-9v9m4.225-9v9m8.9-9v9m4.225-9v9m8.9-9v9m4.225-9v9m8.9-9v9m4.225-9v9m8.9-9v9m4.225-9v9m8.9-9v9m4.225-9v9m8.9-9v9m4.225-9v9m8.9-9v9m4.225-9v9m8.9-9v9m4.225-9v9m8.9-9v9m4.225-9v9m8.9-9v9m4.225-9v9m8.9-9v9m4.225-9v9m8.9-9v9m4.225-9v9m8.9-9v9m4.225-9v9m8.9-9v9m4.225-9v9m8.9-9v9m4.225-9v9m8.9-9v9m4.225-9v9m8.9-9v9m4.225-9v9m8.9-9v9m4.225-9v9m8.9-9v9m4.225-9v9m8.9-9v9m4.225-9v9m8.9-9v9m4.225-9v9m8.9-9v9m4.225-9v9m8.9-9v9m4.225-9v9m8.9-9v9m4.225-9v9m8.9-9v9m4.225-9v9m8.9-9v9m4.225-9v9m8.9-9v9m4.225-9v9m8.9-9v9m4.225-9v9m8.9-9v9m4.225-9v9m8.9-9v9m4.225-9v9m8.9-9v9m4.225-9v9m8.9-9v9m4.225-9v9m8.9-9v9m4.225-9v9m8.9-9v9M572.5 633v9m8.9-9v9m4.225-9v9m8.9-9v9m4.225-9v9m8.9-9v9m4.225-9v9m8.9-9v9m4.225-9v9m8.9-9v9m4.225-9v9m8.9-9v9m4.225-9v9m8.9-9v9m4.225-9v9m8.9-9v9m4.225-9v9m8.9-9v9m4.225-9v9m8.9-9v9m4.225-9v9m8.9-9v9m4.225-9v9m8.9-9v9m4.225-9v9m8.9-9v9m4.225-9v9m8.9-9v9m4.225-9v9m8.9-9v9m4.225-9v9m8.9-9v9m4.225-9v9m8.9-9v9m4.225-9v9m8.9-9v9m4.225-9v9m8.9-9v9m4.225-9v9m8.9-9v9m4.225-9v9m8.9-9v9m4.225-9v9m8.9-9v9m4.225-9v9m8.9-9v9m4.225-9v9m8.9-9v9m4.225-9v9m8.9-9v9m4.225-9v9m8.9-9v9m4.225-9v9m8.9-9v9m4.225-9v9m8.9-9v9m4.225-9v9m8.9-9v9m4.225-9v9m8.9-9v9m4.225-9v9m8.9-9v9m4.225-9v9m8.9-9v9m4.225-9v9m8.9-9v9m4.225-9v9m8.9-9v9m4.225-9v9m8.9-9v9m4.225-9v9m8.9-9v9m4.225-9v9m8.9-9v9m4.225-9v9m8.9-9v9m4.225-9v9m8.9-9v9m4.225-9v9m8.9-9v9m4.225-9v9m8.9-9v9m4.225-9v9m8.9-9v9m4.225-9v9m8.9-9v9m4.225-9v9m8.9-9v9m4.225-9v9m8.9-9v9m4.225-9v9m8.9-9v9m4.225-9v9m8.9-9v9m4.225-9v9m8.9-9v9m4.225-9v9m8.9-9v9m4.225-9v9m8.9-9v9m4.225-9v9m8.9-9v9m4.225-9v9m8.9-9v9m4.225-9v9m8.9-9v9m4.225-9v9m8.9-9v9m4.225-9v9m8.9-9v9m4.225-9v9m8.9-9v9m4.225-9v9m8.9-9v9m4.225-9v9m8.9-9v9M572.5 657v9m8.9-9v9m4.225-9v9m8.9-9v9m4.225-9v9m8.9-9v9m4.225-9v9m8.9-9v9m4.225-9v9m8.9-9v9m4.225-9v9m8.9-9v9m4.225-9v9m8.9-9v9m4.225-9v9m8.9-9v9m4.225-9v9m8.9-9v9m4.225-9v9m8.9-9v9m4.225-9v9m8.9-9v9m4.225-9v9m8.9-9v9m4.225-9v9m8.9-9v9m4.225-9v9m8.9-9v9m4.225-9v9m8.9-9v9m4.225-9v9m8.9-9v9m4.225-9v9m8.9-9v9m4.225-9v9m8.9-9v9m4.225-9v9m8.9-9v9m4.225-9v9m8.9-9v9m4.225-9v9m8.9-9v9m4.225-9v9m8.9-9v9m4.225-9v9m8.9-9v9m4.225-9v9m8.9-9v9m4.225-9v9m8.9-9v9m4.225-9v9m8.9-9v9m4.225-9v9m8.9-9v9m4.225-9v9m8.9-9v9m4.225-9v9m8.9-9v9m4.225-9v9m8.9-9v9m4.225-9v9m8.9-9v9m4.225-9v9m8.9-9v9m4.225-9v9m8.9-9v9m4.225-9v9m8.9-9v9m4.225-9v9m8.9-9v9m4.225-9v9m8.9-9v9m4.225-9v9m8.9-9v9m4.225-9v9m8.9-9v9m4.225-9v9m8.9-9v9m4.225-9v9m8.9-9v9m4.225-9v9m8.9-9v9m4.225-9v9m8.9-9v9m4.225-9v9m8.9-9v9m4.225-9v9m8.9-9v9m4.225-9v9m8.9-9v9m4.225-9v9m8.9-9v9m4.225-9v9m8.9-9v9m4.225-9v9m8.9-9v9m4.225-9v9m8.9-9v9m4.225-9v9m8.9-9v9m4.225-9v9m8.9-9v9m4.225-9v9m8.9-9v9m4.225-9v9m8.9-9v9m4.225-9v9m8.9-9v9m4.225-9v9m8.9-9v9m4.225-9v9m8.9-9v9m4.225-9v9m8.9-9v9m4.225-9v9m8.9-9v9M572.5 680v9m8.9-9v9m4.225-9v9m8.9-9v9m4.225-9v9m8.9-9v9m4.225-9v9m8.9-9v9m4.225-9v9m8.9-9v9m4.225-9v9m8.9-9v9m4.225-9v9m8.9-9v9m4.225-9v9m8.9-9v9m4.225-9v9m8.9-9v9m4.225-9v9m8.9-9v9m4.225-9v9m8.9-9v9m4.225-9v9m8.9-9v9m4.225-9v9m8.9-9v9m4.225-9v9m8.9-9v9m4.225-9v9m8.9-9v9m4.225-9v9m8.9-9v9m4.225-9v9m8.9-9v9m4.225-9v9m8.9-9v9m4.225-9v9m8.9-9v9m4.225-9v9m8.9-9v9m4.225-9v9m8.9-9v9m4.225-9v9m8.9-9v9m4.225-9v9m8.9-9v9m4.225-9v9m8.9-9v9m4.225-9v9m8.9-9v9m4.225-9v9m8.9-9v9m4.225-9v9m8.9-9v9m4.225-9v9m8.9-9v9m4.225-9v9m8.9-9v9m4.225-9v9m8.9-9v9m4.225-9v9m8.9-9v9m4.225-9v9m8.9-9v9m4.225-9v9m8.9-9v9m4.225-9v9m8.9-9v9m4.225-9v9m8.9-9v9m4.225-9v9m8.9-9v9m4.225-9v9m8.9-9v9m4.225-9v9m8.9-9v9m4.225-9v9m8.9-9v9m4.225-9v9m8.9-9v9m4.225-9v9m8.9-9v9m4.225-9v9m8.9-9v9m4.225-9v9m8.9-9v9m4.225-9v9m8.9-9v9m4.225-9v9m8.9-9v9m4.225-9v9m8.9-9v9m4.225-9v9m8.9-9v9m4.225-9v9m8.9-9v9m4.225-9v9m8.9-9v9m4.225-9v9m8.9-9v9m4.225-9v9m8.9-9v9m4.225-9v9m8.9-9v9m4.225-9v9m8.9-9v9m4.225-9v9m8.9-9v9m4.225-9v9m8.9-9v9m4.225-9v9m8.9-9v9m4.225-9v9m8.9-9v9m4.225-9v9m8.9-9v9M572.5 704v9m8.9-9v9m4.225-9v9m8.9-9v9m4.225-9v9m8.9-9v9m4.225-9v9m8.9-9v9m4.225-9v9m8.9-9v9m4.225-9v9m8.9-9v9m4.225-9v9m8.9-9v9m4.225-9v9m8.9-9v9m4.225-9v9m8.9-9v9m4.225-9v9m8.9-9v9m4.225-9v9m8.9-9v9m4.225-9v9m8.9-9v9m4.225-9v9m8.9-9v9m4.225-9v9m8.9-9v9m4.225-9v9m8.9-9v9m4.225-9v9m8.9-9v9m4.225-9v9m8.9-9v9m4.225-9v9m8.9-9v9m4.225-9v9m8.9-9v9m4.225-9v9m8.9-9v9m4.225-9v9m8.9-9v9m4.225-9v9m8.9-9v9m4.225-9v9m8.9-9v9m4.225-9v9m8.9-9v9m4.225-9v9m8.9-9v9m4.225-9v9m8.9-9v9m4.225-9v9m8.9-9v9m4.225-9v9m8.9-9v9m4.225-9v9m8.9-9v9m4.225-9v9m8.9-9v9m4.225-9v9m8.9-9v9m4.225-9v9m8.9-9v9m4.225-9v9m8.9-9v9m4.225-9v9m8.9-9v9m4.225-9v9m8.9-9v9m4.225-9v9m8.9-9v9m4.225-9v9m8.9-9v9m4.225-9v9m8.9-9v9m4.225-9v9m8.9-9v9m4.225-9v9m8.9-9v9m4.225-9v9m8.9-9v9m4.225-9v9m8.9-9v9m4.225-9v9m8.9-9v9m4.225-9v9m8.9-9v9m4.225-9v9m8.9-9v9m4.225-9v9m8.9-9v9m4.225-9v9m8.9-9v9m4.225-9v9m8.9-9v9m4.225-9v9m8.9-9v9m4.225-9v9m8.9-9v9m4.225-9v9m8.9-9v9m4.225-9v9m8.9-9v9m4.225-9v9m8.9-9v9m4.225-9v9m8.9-9v9m4.225-9v9m8.9-9v9m4.225-9v9m8.9-9v9m4.225-9v9m8.9-9v9m4.225-9v9m8.9-9v9M572.5 728v9m8.9-9v9m4.225-9v9m8.9-9v9m4.225-9v9m8.9-9v9m4.225-9v9m8.9-9v9m4.225-9v9m8.9-9v9m4.225-9v9m8.9-9v9m4.225-9v9m8.9-9v9m4.225-9v9m8.9-9v9m4.225-9v9m8.9-9v9m4.225-9v9m8.9-9v9m4.225-9v9m8.9-9v9m4.225-9v9m8.9-9v9m4.225-9v9m8.9-9v9m4.225-9v9m8.9-9v9m4.225-9v9m8.9-9v9m4.225-9v9m8.9-9v9m4.225-9v9m8.9-9v9m4.225-9v9m8.9-9v9m4.225-9v9m8.9-9v9m4.225-9v9m8.9-9v9m4.225-9v9m8.9-9v9m4.225-9v9m8.9-9v9m4.225-9v9m8.9-9v9m4.225-9v9m8.9-9v9m4.225-9v9m8.9-9v9m4.225-9v9m8.9-9v9m4.225-9v9m8.9-9v9m4.225-9v9m8.9-9v9m4.225-9v9m8.9-9v9m4.225-9v9m8.9-9v9m4.225-9v9m8.9-9v9m4.225-9v9m8.9-9v9m4.225-9v9m8.9-9v9m4.225-9v9m8.9-9v9m4.225-9v9m8.9-9v9m4.225-9v9m8.9-9v9m4.225-9v9m8.9-9v9m4.225-9v9m8.9-9v9m4.225-9v9m8.9-9v9m4.225-9v9m8.9-9v9m4.225-9v9m8.9-9v9m4.225-9v9m8.9-9v9m4.225-9v9m8.9-9v9m4.225-9v9m8.9-9v9m4.225-9v9m8.9-9v9m4.225-9v9m8.9-9v9m4.225-9v9m8.9-9v9m4.225-9v9m8.9-9v9m4.225-9v9m8.9-9v9m4.225-9v9m8.9-9v9m4.225-9v9m8.9-9v9m4.225-9v9m8.9-9v9m4.225-9v9m8.9-9v9m4.225-9v9m8.9-9v9m4.225-9v9m8.9-9v9m4.225-9v9m8.9-9v9m4.225-9v9m8.9-9v9m4.225-9v9m8.9-9v9M572.5 751v9m8.9-9v9m4.225-9v9m8.9-9v9m4.225-9v9m8.9-9v9m4.225-9v9m8.9-9v9m4.225-9v9m8.9-9v9m4.225-9v9m8.9-9v9m4.225-9v9m8.9-9v9m4.225-9v9m8.9-9v9m4.225-9v9m8.9-9v9m4.225-9v9m8.9-9v9m4.225-9v9m8.9-9v9m4.225-9v9m8.9-9v9m4.225-9v9m8.9-9v9m4.225-9v9m8.9-9v9m4.225-9v9m8.9-9v9m4.225-9v9m8.9-9v9m4.225-9v9m8.9-9v9m4.225-9v9m8.9-9v9m4.225-9v9m8.9-9v9m4.225-9v9m8.9-9v9m4.225-9v9m8.9-9v9m4.225-9v9m8.9-9v9m4.225-9v9m8.9-9v9m4.225-9v9m8.9-9v9m4.225-9v9m8.9-9v9m4.225-9v9m8.9-9v9m4.225-9v9m8.9-9v9m4.225-9v9m8.9-9v9m4.225-9v9m8.9-9v9m4.225-9v9m8.9-9v9m4.225-9v9m8.9-9v9m4.225-9v9m8.9-9v9m4.225-9v9m8.9-9v9m4.225-9v9m8.9-9v9m4.225-9v9m8.9-9v9m4.225-9v9m8.9-9v9m4.225-9v9m8.9-9v9m4.225-9v9m8.9-9v9m4.225-9v9m8.9-9v9m4.225-9v9m8.9-9v9m4.225-9v9m8.9-9v9m4.225-9v9m8.9-9v9m4.225-9v9m8.9-9v9m4.225-9v9m8.9-9v9m4.225-9v9m8.9-9v9m4.225-9v9m8.9-9v9m4.225-9v9m8.9-9v9m4.225-9v9m8.9-9v9m4.225-9v9m8.9-9v9m4.225-9v9m8.9-9v9m4.225-9v9m8.9-9v9m4.225-9v9m8.9-9v9m4.225-9v9m8.9-9v9m4.225-9v9m8.9-9v9m4.225-9v9m8.9-9v9m4.225-9v9m8.9-9v9m4.225-9v9m8.9-9v9m4.225-9v9m8.9-9v9M572.5 775v9m8.9-9v9m4.225-9v9m8.9-9v9m4.225-9v9m8.9-9v9m4.225-9v9m8.9-9v9m4.225-9v9m8.9-9v9m4.225-9v9m8.9-9v9m4.225-9v9m8.9-9v9m4.225-9v9m8.9-9v9m4.225-9v9m8.9-9v9m4.225-9v9m8.9-9v9m4.225-9v9m8.9-9v9m4.225-9v9m8.9-9v9m4.225-9v9m8.9-9v9m4.225-9v9m8.9-9v9m4.225-9v9m8.9-9v9m4.225-9v9m8.9-9v9m4.225-9v9m8.9-9v9m4.225-9v9m8.9-9v9m4.225-9v9m8.9-9v9m4.225-9v9m8.9-9v9m4.225-9v9m8.9-9v9m4.225-9v9m8.9-9v9m4.225-9v9m8.9-9v9m4.225-9v9m8.9-9v9m4.225-9v9m8.9-9v9m4.225-9v9m8.9-9v9m4.225-9v9m8.9-9v9m4.225-9v9m8.9-9v9m4.225-9v9m8.9-9v9m4.225-9v9m8.9-9v9m4.225-9v9m8.9-9v9m4.225-9v9m8.9-9v9m4.225-9v9m8.9-9v9m4.225-9v9m8.9-9v9m4.225-9v9m8.9-9v9m4.225-9v9m8.9-9v9m4.225-9v9m8.9-9v9m4.225-9v9m8.9-9v9m4.225-9v9m8.9-9v9m4.225-9v9m8.9-9v9m4.225-9v9m8.9-9v9m4.225-9v9m8.9-9v9m4.225-9v9m8.9-9v9m4.225-9v9m8.9-9v9m4.225-9v9m8.9-9v9m4.225-9v9m8.9-9v9m4.225-9v9m8.9-9v9m4.225-9v9m8.9-9v9m4.225-9v9m8.9-9v9m4.225-9v9m8.9-9v9m4.225-9v9m8.9-9v9m4.225-9v9m8.9-9v9m4.225-9v9m8.9-9v9m4.225-9v9m8.9-9v9m4.225-9v9m8.9-9v9m4.225-9v9m8.9-9v9m4.225-9v9m8.9-9v9m4.225-9v9m8.9-9v9M572.5 798v9m8.9-9v9m4.225-9v9m8.9-9v9m4.225-9v9m8.9-9v9m4.225-9v9m8.9-9v9m4.225-9v9m8.9-9v9m4.225-9v9m8.9-9v9m4.225-9v9m8.9-9v9m4.225-9v9m8.9-9v9m4.225-9v9m8.9-9v9m4.225-9v9m8.9-9v9m4.225-9v9m8.9-9v9m4.225-9v9m8.9-9v9m4.225-9v9m8.9-9v9m4.225-9v9m8.9-9v9m4.225-9v9m8.9-9v9m4.225-9v9m8.9-9v9m4.225-9v9m8.9-9v9m4.225-9v9m8.9-9v9m4.225-9v9m8.9-9v9m4.225-9v9m8.9-9v9m4.225-9v9m8.9-9v9m4.225-9v9m8.9-9v9m4.225-9v9m8.9-9v9m4.225-9v9m8.9-9v9m4.225-9v9m8.9-9v9m4.225-9v9m8.9-9v9m4.225-9v9m8.9-9v9m4.225-9v9m8.9-9v9m4.225-9v9m8.9-9v9m4.225-9v9m8.9-9v9m4.225-9v9m8.9-9v9m4.225-9v9m8.9-9v9m4.225-9v9m8.9-9v9m4.225-9v9m8.9-9v9m4.225-9v9m8.9-9v9m4.225-9v9m8.9-9v9m4.225-9v9m8.9-9v9m4.225-9v9m8.9-9v9m4.225-9v9m8.9-9v9m4.225-9v9m8.9-9v9m4.225-9v9m8.9-9v9m4.225-9v9m8.9-9v9m4.225-9v9m8.9-9v9m4.225-9v9m8.9-9v9m4.225-9v9m8.9-9v9m4.225-9v9m8.9-9v9m4.225-9v9m8.9-9v9m4.225-9v9m8.9-9v9m4.225-9v9m8.9-9v9m4.225-9v9m8.9-9v9m4.225-9v9m8.9-9v9m4.225-9v9m8.9-9v9m4.225-9v9m8.9-9v9m4.225-9v9m8.9-9v9m4.225-9v9m8.9-9v9m4.225-9v9m8.9-9v9m4.225-9v9m8.9-9v9m4.225-9v9m8.9-9v9M572.5 822v9m8.9-9v9m4.225-9v9m8.9-9v9m4.225-9v9m8.9-9v9m4.225-9v9m8.9-9v9m4.225-9v9m8.9-9v9m4.225-9v9m8.9-9v9m4.225-9v9m8.9-9v9m4.225-9v9m8.9-9v9m4.225-9v9m8.9-9v9m4.225-9v9m8.9-9v9m4.225-9v9m8.9-9v9m4.225-9v9m8.9-9v9m4.225-9v9m8.9-9v9m4.225-9v9m8.9-9v9m4.225-9v9m8.9-9v9m4.225-9v9m8.9-9v9m4.225-9v9m8.9-9v9m4.225-9v9m8.9-9v9m4.225-9v9m8.9-9v9m4.225-9v9m8.9-9v9m4.225-9v9m8.9-9v9m4.225-9v9m8.9-9v9m4.225-9v9m8.9-9v9m4.225-9v9m8.9-9v9m4.225-9v9m8.9-9v9m4.225-9v9m8.9-9v9m4.225-9v9m8.9-9v9m4.225-9v9m8.9-9v9m4.225-9v9m8.9-9v9m4.225-9v9m8.9-9v9m4.225-9v9m8.9-9v9m4.225-9v9m8.9-9v9m4.225-9v9m8.9-9v9m4.225-9v9m8.9-9v9m4.225-9v9m8.9-9v9m4.225-9v9m8.9-9v9m4.225-9v9m8.9-9v9m4.225-9v9m8.9-9v9m4.225-9v9m8.9-9v9m4.225-9v9m8.9-9v9m4.225-9v9m8.9-9v9m4.225-9v9m8.9-9v9m4.225-9v9m8.9-9v9m4.225-9v9m8.9-9v9m4.225-9v9m8.9-9v9m4.225-9v9m8.9-9v9m4.225-9v9m8.9-9v9m4.225-9v9m8.9-9v9m4.225-9v9m8.9-9v9m4.225-9v9m8.9-9v9m4.225-9v9m8.9-9v9m4.225-9v9m8.9-9v9m4.225-9v9m8.9-9v9m4.225-9v9m8.9-9v9m4.225-9v9m8.9-9v9m4.225-9v9m8.9-9v9m4.225-9v9m8.9-9v9m4.225-9v9m8.9-9v9M572.5 846v9m8.9-9v9m4.225-9v9m8.9-9v9m4.225-9v9m8.9-9v9m4.225-9v9m8.9-9v9m4.225-9v9m8.9-9v9m4.225-9v9m8.9-9v9m4.225-9v9m8.9-9v9m4.225-9v9m8.9-9v9m4.225-9v9m8.9-9v9m4.225-9v9m8.9-9v9m4.225-9v9m8.9-9v9m4.225-9v9m8.9-9v9m4.225-9v9m8.9-9v9m4.225-9v9m8.9-9v9m4.225-9v9m8.9-9v9m4.225-9v9m8.9-9v9m4.225-9v9m8.9-9v9m4.225-9v9m8.9-9v9m4.225-9v9m8.9-9v9m4.225-9v9m8.9-9v9m4.225-9v9m8.9-9v9m4.225-9v9m8.9-9v9m4.225-9v9m8.9-9v9m4.225-9v9m8.9-9v9m4.225-9v9m8.9-9v9m4.225-9v9m8.9-9v9m4.225-9v9m8.9-9v9m4.225-9v9m8.9-9v9m4.225-9v9m8.9-9v9m4.225-9v9m8.9-9v9m4.225-9v9m8.9-9v9m4.225-9v9m8.9-9v9m4.225-9v9m8.9-9v9m4.225-9v9m8.9-9v9m4.225-9v9m8.9-9v9m4.225-9v9m8.9-9v9m4.225-9v9m8.9-9v9m4.225-9v9m8.9-9v9m4.225-9v9m8.9-9v9m4.225-9v9m8.9-9v9m4.225-9v9m8.9-9v9m4.225-9v9m8.9-9v9m4.225-9v9m8.9-9v9m4.225-9v9m8.9-9v9m4.225-9v9m8.9-9v9m4.225-9v9m8.9-9v9m4.225-9v9m8.9-9v9m4.225-9v9m8.9-9v9m4.225-9v9m8.9-9v9m4.225-9v9m8.9-9v9m4.225-9v9m8.9-9v9m4.225-9v9m8.9-9v9m4.225-9v9m8.9-9v9m4.225-9v9m8.9-9v9m4.225-9v9m8.9-9v9m4.225-9v9m8.9-9v9m4.225-9v9m8.9-9v9m4.225-9v9m8.9-9v9M572.5 869v9m8.9-9v9m4.225-9v9m8.9-9v9m4.225-9v9m8.9-9v9m4.225-9v9m8.9-9v9m4.225-9v9m8.9-9v9m4.225-9v9m8.9-9v9m4.225-9v9m8.9-9v9m4.225-9v9m8.9-9v9m4.225-9v9m8.9-9v9m4.225-9v9m8.9-9v9m4.225-9v9m8.9-9v9m4.225-9v9m8.9-9v9m4.225-9v9m8.9-9v9m4.225-9v9m8.9-9v9m4.225-9v9m8.9-9v9m4.225-9v9m8.9-9v9m4.225-9v9m8.9-9v9m4.225-9v9m8.9-9v9m4.225-9v9m8.9-9v9m4.225-9v9m8.9-9v9m4.225-9v9m8.9-9v9m4.225-9v9m8.9-9v9m4.225-9v9m8.9-9v9m4.225-9v9m8.9-9v9m4.225-9v9m8.9-9v9m4.225-9v9m8.9-9v9m4.225-9v9m8.9-9v9m4.225-9v9m8.9-9v9m4.225-9v9m8.9-9v9m4.225-9v9m8.9-9v9m4.225-9v9m8.9-9v9m4.225-9v9m8.9-9v9m4.225-9v9m8.9-9v9m4.225-9v9m8.9-9v9m4.225-9v9m8.9-9v9m4.225-9v9m8.9-9v9m4.225-9v9m8.9-9v9m4.225-9v9m8.9-9v9m4.225-9v9m8.9-9v9m4.225-9v9m8.9-9v9m4.225-9v9m8.9-9v9m4.225-9v9m8.9-9v9m4.225-9v9m8.9-9v9m4.225-9v9m8.9-9v9m4.225-9v9m8.9-9v9m4.225-9v9m8.9-9v9m4.225-9v9m8.9-9v9m4.225-9v9m8.9-9v9m4.225-9v9m8.9-9v9m4.225-9v9m8.9-9v9m4.225-9v9m8.9-9v9m4.225-9v9m8.9-9v9m4.225-9v9m8.9-9v9m4.225-9v9m8.9-9v9m4.225-9v9m8.9-9v9m4.225-9v9m8.9-9v9m4.225-9v9m8.9-9v9m4.225-9v9m8.9-9v9M572.5 893v9m8.9-9v9m4.225-9v9m8.9-9v9m4.225-9v9m8.9-9v9m4.225-9v9m8.9-9v9m4.225-9v9m8.9-9v9m4.225-9v9m8.9-9v9m4.225-9v9m8.9-9v9m4.225-9v9m8.9-9v9m4.225-9v9m8.9-9v9m4.225-9v9m8.9-9v9m4.225-9v9m8.9-9v9m4.225-9v9m8.9-9v9m4.225-9v9m8.9-9v9m4.225-9v9m8.9-9v9m4.225-9v9m8.9-9v9m4.225-9v9m8.9-9v9m4.225-9v9m8.9-9v9m4.225-9v9m8.9-9v9m4.225-9v9m8.9-9v9m4.225-9v9m8.9-9v9m4.225-9v9m8.9-9v9m4.225-9v9m8.9-9v9m4.225-9v9m8.9-9v9m4.225-9v9m8.9-9v9m4.225-9v9m8.9-9v9m4.225-9v9m8.9-9v9m4.225-9v9m8.9-9v9m4.225-9v9m8.9-9v9m4.225-9v9m8.9-9v9m4.225-9v9m8.9-9v9m4.225-9v9m8.9-9v9m4.225-9v9m8.9-9v9m4.225-9v9m8.9-9v9m4.225-9v9m8.9-9v9m4.225-9v9m8.9-9v9m4.225-9v9m8.9-9v9m4.225-9v9m8.9-9v9m4.225-9v9m8.9-9v9m4.225-9v9m8.9-9v9m4.225-9v9m8.9-9v9m4.225-9v9m8.9-9v9m4.225-9v9m8.9-9v9m4.225-9v9m8.9-9v9m4.225-9v9m8.9-9v9m4.225-9v9m8.9-9v9m4.225-9v9m8.9-9v9m4.225-9v9m8.9-9v9m4.225-9v9m8.9-9v9m4.225-9v9m8.9-9v9m4.225-9v9m8.9-9v9m4.225-9v9m8.9-9v9m4.225-9v9m8.9-9v9m4.225-9v9m8.9-9v9m4.225-9v9m8.9-9v9m4.225-9v9m8.9-9v9m4.225-9v9m8.9-9v9m4.225-9v9m8.9-9v9m4.225-9v9m8.9-9v9M572.5 917v9m8.9-9v9m4.225-9v9m8.9-9v9m4.225-9v9m8.9-9v9m4.225-9v9m8.9-9v9m4.225-9v9m8.9-9v9m4.225-9v9m8.9-9v9m4.225-9v9m8.9-9v9m4.225-9v9m8.9-9v9m4.225-9v9m8.9-9v9m4.225-9v9m8.9-9v9m4.225-9v9m8.9-9v9m4.225-9v9m8.9-9v9m4.225-9v9m8.9-9v9m4.225-9v9m8.9-9v9m4.225-9v9m8.9-9v9m4.225-9v9m8.9-9v9m4.225-9v9m8.9-9v9m4.225-9v9m8.9-9v9m4.225-9v9m8.9-9v9m4.225-9v9m8.9-9v9m4.225-9v9m8.9-9v9m4.225-9v9m8.9-9v9m4.225-9v9m8.9-9v9m4.225-9v9m8.9-9v9m4.225-9v9m8.9-9v9m4.225-9v9m8.9-9v9m4.225-9v9m8.9-9v9m4.225-9v9m8.9-9v9m4.225-9v9m8.9-9v9m4.225-9v9m8.9-9v9m4.225-9v9m8.9-9v9m4.225-9v9m8.9-9v9m4.225-9v9m8.9-9v9m4.225-9v9m8.9-9v9m4.225-9v9m8.9-9v9m4.225-9v9m8.9-9v9m4.225-9v9m8.9-9v9m4.225-9v9m8.9-9v9m4.225-9v9m8.9-9v9m4.225-9v9m8.9-9v9m4.225-9v9m8.9-9v9m4.225-9v9m8.9-9v9m4.225-9v9m8.9-9v9m4.225-9v9m8.9-9v9m4.225-9v9m8.9-9v9m4.225-9v9m8.9-9v9m4.225-9v9m8.9-9v9m4.225-9v9m8.9-9v9m4.225-9v9m8.9-9v9m4.225-9v9m8.9-9v9m4.225-9v9m8.9-9v9m4.225-9v9m8.9-9v9m4.225-9v9m8.9-9v9m4.225-9v9m8.9-9v9m4.225-9v9m8.9-9v9m4.225-9v9m8.9-9v9m4.225-9v9m8.9-9v9m4.225-9v9m8.9-9v9M572.5 940v9m8.9-9v9m4.225-9v9m8.9-9v9m4.225-9v9m8.9-9v9m4.225-9v9m8.9-9v9m4.225-9v9m8.9-9v9m4.225-9v9m8.9-9v9m4.225-9v9m8.9-9v9m4.225-9v9m8.9-9v9m4.225-9v9m8.9-9v9m4.225-9v9m8.9-9v9m4.225-9v9m8.9-9v9m4.225-9v9m8.9-9v9m4.225-9v9m8.9-9v9m4.225-9v9m8.9-9v9m4.225-9v9m8.9-9v9m4.225-9v9m8.9-9v9m4.225-9v9m8.9-9v9m4.225-9v9m8.9-9v9m4.225-9v9m8.9-9v9m4.225-9v9m8.9-9v9m4.225-9v9m8.9-9v9m4.225-9v9m8.9-9v9m4.225-9v9m8.9-9v9m4.225-9v9m8.9-9v9m4.225-9v9m8.9-9v9m4.225-9v9m8.9-9v9m4.225-9v9m8.9-9v9m4.225-9v9m8.9-9v9m4.225-9v9m8.9-9v9m4.225-9v9m8.9-9v9m4.225-9v9m8.9-9v9m4.225-9v9m8.9-9v9m4.225-9v9m8.9-9v9m4.225-9v9m8.9-9v9m4.225-9v9m8.9-9v9m4.225-9v9m8.9-9v9m4.225-9v9m8.9-9v9m4.225-9v9m8.9-9v9m4.225-9v9m8.9-9v9m4.225-9v9m8.9-9v9m4.225-9v9m8.9-9v9m4.225-9v9m8.9-9v9m4.225-9v9m8.9-9v9m4.225-9v9m8.9-9v9m4.225-9v9m8.9-9v9m4.225-9v9m8.9-9v9m4.225-9v9m8.9-9v9m4.225-9v9m8.9-9v9m4.225-9v9m8.9-9v9m4.225-9v9m8.9-9v9m4.225-9v9m8.9-9v9m4.225-9v9m8.9-9v9m4.225-9v9m8.9-9v9m4.225-9v9m8.9-9v9m4.225-9v9m8.9-9v9m4.225-9v9m8.9-9v9m4.225-9v9m8.9-9v9m4.225-9v9m8.9-9v9"/></svg><div id="caret"></div>
<div id="sb"><div class="a" style="left:1px;top:1px;width:18px;height:17px;background:#4d4d4d"></div><div class="a" style="left:1px;top:20px;width:18px;height:19px;background:#4d4d4d"></div><div class="a" style="left:1px;top:785px;width:18px;height:17px;background:#4d4d4d"></div>
<svg class="a" style="left:0;top:0" width="20" height="805"><path d="M5 11.200h9.400l-4.700-5z" fill="#9d9d9d"/><path d="M5 791.300h9.400l-4.700 5z" fill="#9d9d9d"/></svg></div>
<svg class="a" style="left:1830px;top:136px" width="66" height="58" viewBox="1830 136 66 58"><path d="M1834.500 140.500h47v15l9.200 8.900-9.200 8.900v15.200h-47z" fill="#363636" stroke="#bdbdbd" stroke-width="1"/><path d="M1851 154h12v19.600l-6-7.200-6 7.200z" fill="#3b7fc8"/></svg>
<div id="status"><div class="a" style="left:1590px;top:0;width:50px;height:6px;background:#505050"></div><div class="a" style="left:1556px;top:4.500px;width:7px;height:2px;background:#fff"></div><div class="a" style="left:1566px;top:4.500px;width:7px;height:2px;background:#fff"></div><div class="a" style="left:1606px;top:4.500px;width:17px;height:2px;background:#fff"></div></div>
</body></html>
